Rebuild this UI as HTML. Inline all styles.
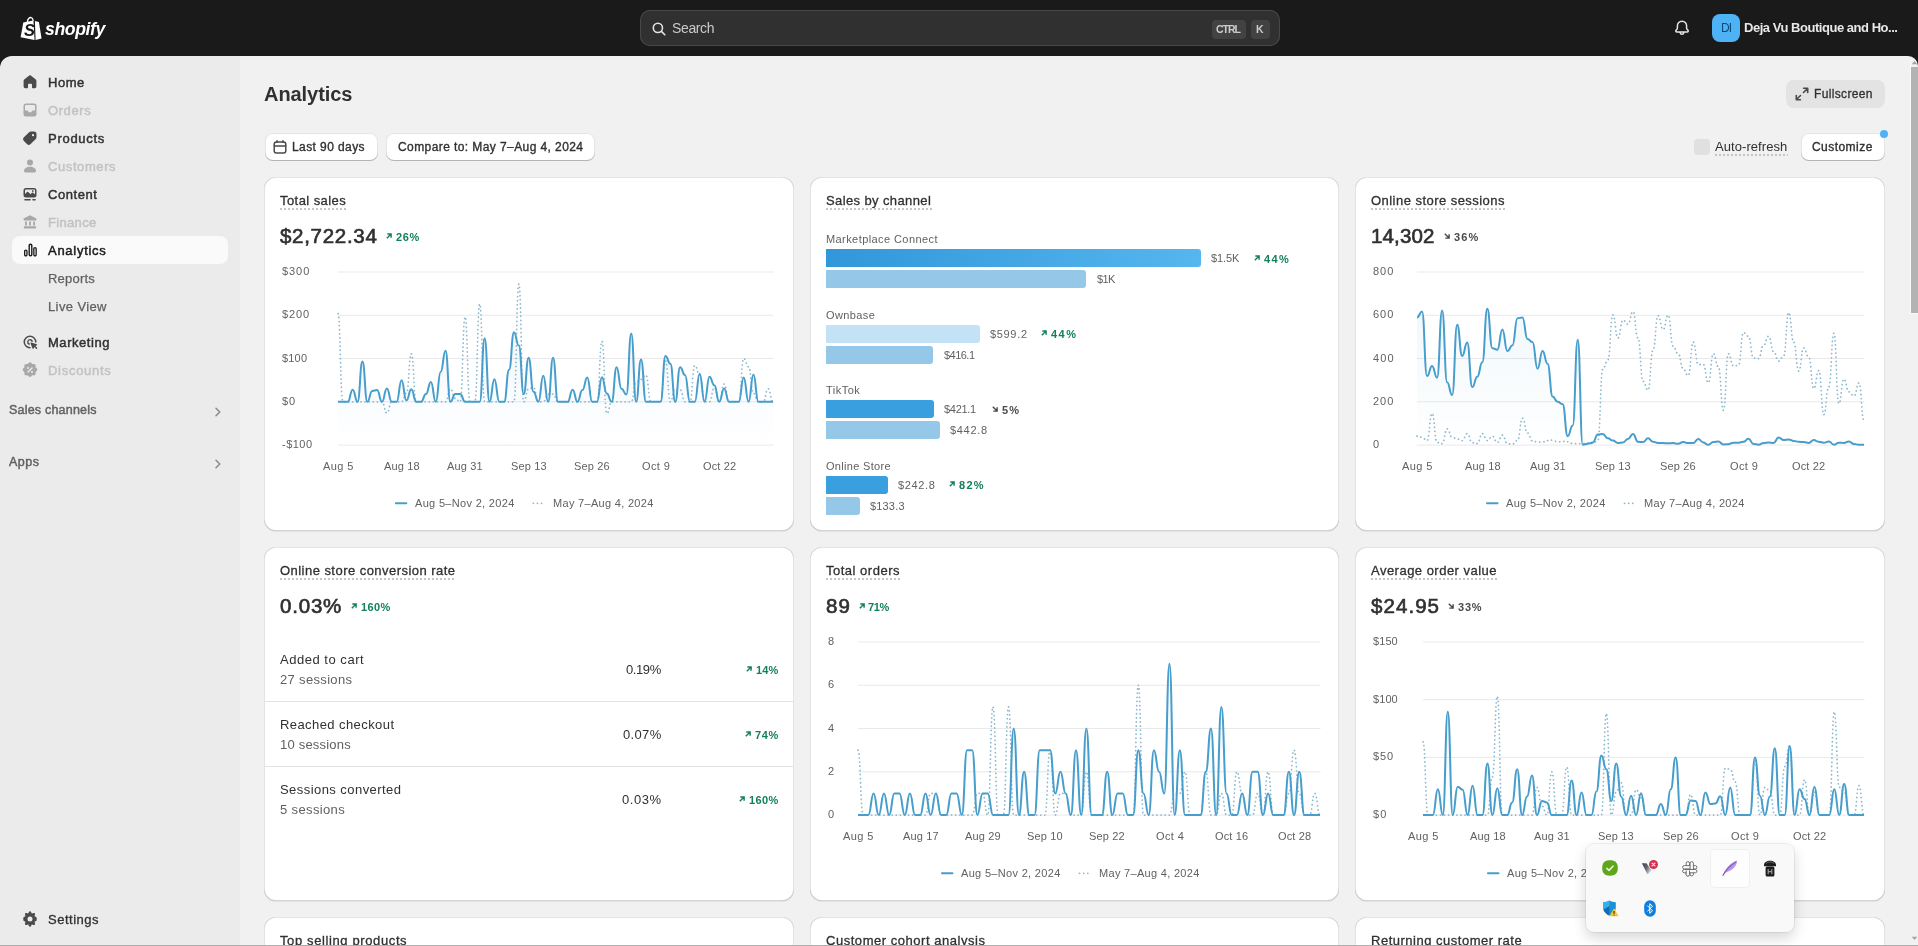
<!DOCTYPE html><html><head><meta charset="utf-8"><title>Analytics</title><style>
*{box-sizing:border-box;margin:0;padding:0}
html,body{width:1918px;height:946px;overflow:hidden;background:#1a1a1a;font-family:"Liberation Sans",sans-serif;}
.t{position:absolute;white-space:nowrap;display:block;will-change:transform}
.abs{position:absolute}
#root{position:absolute;left:0;top:0;width:1918px;height:946px;overflow:hidden;background:#1a1a1a}
#top{position:absolute;left:0;top:0;width:1918px;height:56px;background:#1a1a1a}
#side{position:absolute;left:0;top:56px;width:240px;height:890px;background:#ebebeb;border-top-left-radius:12px}
#main{position:absolute;left:240px;top:56px;width:1678px;height:890px;background:#f1f1f1;border-top-right-radius:10px;overflow:hidden}
.card{position:absolute;background:#fff;border-radius:12px;box-shadow:0 1px 0 0 rgba(26,26,26,.07), inset 1px 0 0 0 rgba(0,0,0,.11), inset -1px 0 0 0 rgba(0,0,0,.11), inset 0 -1px 0 0 rgba(0,0,0,.16), inset 0 1px 0 0 rgba(204,204,204,.5)}
.btn{position:absolute;background:#fff;border-radius:8px;box-shadow:inset 0 -1px 0 0 #b5b5b5, inset 0 0 0 1px rgba(0,0,0,.1), inset 0 .5px 0 1.5px #fff}
.ul{position:absolute;height:2px;background-image:radial-gradient(circle at 1px 1px,#c4c4c4 0.9px,transparent 1.1px);background-size:4px 2px;background-repeat:repeat-x}
svg{position:absolute;overflow:visible}
</style></head><body><div id="root">
<div id="top">
<svg style="left:19.5px;top:15.5px" width="22" height="25" viewBox="0 0 22 25">
<path d="M3.3 6.6 L13.4 4.6 L14.6 23.9 L0.6 21.3 Z" fill="#fff"/>
<path d="M14.9 4.9 L18.9 5.9 L21.6 22.4 L15.6 23.9 Z" fill="#fff"/>
<path d="M6.6 6.3 C6.9 2.6 9.2 0.6 11.2 0.9 C12.9 1.2 13.6 3.0 13.8 4.9 L12.6 5.2 C12.4 3.5 11.9 2.3 10.9 2.2 C9.6 2.1 8.2 3.8 8.0 6.0 Z" fill="#fff"/>
</svg>
<span class="t" style="left:24.00px;top:21.00px;font-size:16.5px;line-height:18px;font-weight:700;font-style:italic;color:#1a1a1a;">S</span>
<span class="t" style="left:45.00px;top:19.00px;font-size:17.7px;line-height:20px;font-weight:700;font-style:italic;color:#fff;letter-spacing:-0.440px;">shopify</span>
<div class="abs" style="left:640px;top:10px;width:640px;height:36px;background:#303030;border-radius:10px;box-shadow:inset 0 0 0 1px #484848"></div>
<svg style="left:652px;top:21.5px" width="14" height="14" viewBox="0 0 14 14"><circle cx="5.9" cy="5.9" r="4.6" fill="none" stroke="#e3e3e3" stroke-width="1.6"/><path d="M9.4 9.4 L12.8 12.8" stroke="#e3e3e3" stroke-width="1.6" stroke-linecap="round"/></svg>
<span class="t" style="left:672.00px;top:20.00px;font-size:14px;line-height:16px;font-weight:400;color:#c9c9c9;letter-spacing:-0.372px;">Search</span>
<div class="abs" style="left:1211.5px;top:19.5px;width:34.5px;height:19px;background:#424242;border-radius:4px"></div>
<span class="t" style="left:1216.00px;top:23.00px;font-size:10.5px;line-height:12px;font-weight:700;color:#cccccc;letter-spacing:-0.998px;">CTRL</span>
<div class="abs" style="left:1250.5px;top:19.5px;width:19px;height:19px;background:#424242;border-radius:4px"></div>
<span class="t" style="left:1256.00px;top:23.00px;font-size:10.5px;line-height:12px;font-weight:700;color:#cccccc;">K</span>
<svg style="left:1672px;top:18px" width="20" height="20" viewBox="0 0 20 20"><path d="M10 3.2c-2.6 0-4.6 2-4.6 4.6v2.1c0 .5-.2 1-.5 1.4l-.9 1c-.6.7-.1 1.7.8 1.7h10.4c.9 0 1.4-1 .8-1.7l-.9-1c-.3-.4-.5-.9-.5-1.4V7.800c0-2.600-2-4.600-4.600-4.600Z" fill="none" stroke="#e3e3e3" stroke-width="1.5" stroke-linejoin="round"/><path d="M8.100 14.600c.2 1 .9 1.700 1.900 1.700s1.700-.7 1.900-1.700" fill="none" stroke="#e3e3e3" stroke-width="1.5" stroke-linecap="round"/></svg>
<div class="abs" style="left:1712px;top:14px;width:28px;height:28px;background:#4eb3f4;border-radius:8px"></div>
<span class="t" style="left:1721.00px;top:21.00px;font-size:12px;line-height:14px;font-weight:400;color:#0b4a78;letter-spacing:-0.800px;">DI</span>
<span class="t" style="left:1744.00px;top:20.00px;font-size:13px;line-height:15px;font-weight:700;color:#e8e8e8;letter-spacing:-0.466px;">Deja Vu Boutique and Ho...</span>
</div>
<div id="side"></div>
<div class="abs" style="left:12px;top:236px;width:216px;height:28px;background:#fafafa;border-radius:8px"></div>
<svg style="left:20px;top:72px" width="20" height="20" viewBox="0 0 20 20" fill="#4a4a4a"><path d="M9.2 3.500a1.300 1.300 0 0 1 1.600 0l5 4.100c.4.300.600.800.600 1.300v5.600a1.700 1.700 0 0 1-1.700 1.700h-1.900a.8.8 0 0 1-.8-.8v-2.700a.9.900 0 0 0-.9-.9h-2.200a.9.900 0 0 0-.9.900v2.700a.8.8 0 0 1-.8.800h-1.900a1.700 1.700 0 0 1-1.700-1.700v-5.600c0-.5.200-1 .600-1.300l5-4.100Z"/></svg>
<span class="t" style="left:48.00px;top:75.00px;font-size:13px;line-height:15px;font-weight:400;color:#303030;letter-spacing:0.507px;-webkit-text-stroke:0.45px #303030;">Home</span>
<svg style="left:20px;top:100px" width="20" height="20" viewBox="0 0 20 20" fill="#a8a8a8"><path fill-rule="evenodd" d="M6 3.500a2.500 2.500 0 0 0-2.500 2.500v8a2.500 2.500 0 0 0 2.500 2.500h8a2.500 2.500 0 0 0 2.500-2.500v-8a2.500 2.500 0 0 0-2.500-2.500h-8Zm-1 2.700c0-.7.500-1.200 1.200-1.200h7.600c.7 0 1.200.5 1.200 1.200v4.300h-2.200c-.4 0-.7.200-.9.500l-.4.900c-.1.200-.3.300-.5.300h-2c-.2 0-.4-.1-.5-.3l-.4-.9c-.2-.3-.5-.5-.9-.5h-2.200v-4.300Z"/><path d="M8.300 8.300 10 9.800l1.700-1.500" stroke="#ebebeb" stroke-width="1" fill="none"/></svg>
<span class="t" style="left:48.00px;top:103.00px;font-size:13px;line-height:15px;font-weight:400;color:#c2c2c2;letter-spacing:0.580px;-webkit-text-stroke:0.45px #c2c2c2;">Orders</span>
<svg style="left:20px;top:128px" width="20" height="20" viewBox="0 0 20 20" fill="#4a4a4a"><path fill-rule="evenodd" d="M10.900 3.500a2.500 2.500 0 0 0-1.800.7l-5.400 5.400a2.300 2.300 0 0 0 0 3.200l3.500 3.500a2.300 2.300 0 0 0 3.200 0l5.400-5.400c.5-.5.700-1.100.7-1.800v-3.100a2.500 2.500 0 0 0-2.500-2.500h-3.100Zm2.100 4.800a1.100 1.100 0 1 0 0-2.200 1.100 1.100 0 0 0 0 2.200Z"/></svg>
<span class="t" style="left:48.00px;top:131.00px;font-size:13px;line-height:15px;font-weight:400;color:#303030;letter-spacing:0.720px;-webkit-text-stroke:0.45px #303030;">Products</span>
<svg style="left:20px;top:156px" width="20" height="20" viewBox="0 0 20 20" fill="#a8a8a8"><path d="M10 3.500a3 3 0 1 0 0 6 3 3 0 0 0 0-6Z"/><path d="M4 14.700c0-2.300 2.700-4 6-4s6 1.700 6 4c0 1-.8 1.800-1.800 1.800h-8.400c-1 0-1.800-.8-1.800-1.800Z"/></svg>
<span class="t" style="left:48.00px;top:159.00px;font-size:13px;line-height:15px;font-weight:400;color:#c2c2c2;letter-spacing:0.594px;-webkit-text-stroke:0.45px #c2c2c2;">Customers</span>
<svg style="left:20px;top:184px" width="20" height="20" viewBox="0 0 20 20" fill="#4a4a4a"><path fill-rule="evenodd" d="M6 4a2.500 2.500 0 0 0-2.500 2.500v4.500a2.500 2.500 0 0 0 2.500 2.500h8a2.500 2.500 0 0 0 2.500-2.500v-4.500a2.500 2.500 0 0 0-2.500-2.500h-8Zm-1 2.700c0-.7.500-1.200 1.200-1.200h7.600c.7 0 1.200.5 1.200 1.200v3.800l-1.800-1.700a.9.900 0 0 0-1.200 0l-1.600 1.500-2.100-2.300a.9.900 0 0 0-1.300 0l-2 2v-3.300Zm7.800 1.300a.9.900 0 1 0 0-1.800.9.900 0 0 0 0 1.800Z"/><path d="M4.200 15.700c0-.4.300-.7.700-.7h5.200c.4 0 .7.300.7.700s-.3.700-.7.700h-5.200a.7.700 0 0 1-.7-.7Zm8 0c0-.4.300-.7.700-.7h2.200c.4 0 .7.300.7.700s-.3.700-.7.700h-2.200a.7.700 0 0 1-.7-.7Z"/></svg>
<span class="t" style="left:48.00px;top:187.00px;font-size:13px;line-height:15px;font-weight:400;color:#303030;letter-spacing:0.545px;-webkit-text-stroke:0.45px #303030;">Content</span>
<svg style="left:20px;top:212px" width="20" height="20" viewBox="0 0 20 20" fill="#a8a8a8"><path d="M9.500 3.400a1 1 0 0 1 1 0l5.500 2.800c.3.200.5.500.5.800v.700c0 .4-.3.700-.7.700h-11.600a.7.700 0 0 1-.7-.7v-.7c0-.3.200-.6.500-.8l5.500-2.800Z"/><path d="M5 9.500h1.800v4h-1.800zM9.100 9.500h1.800v4h-1.800zM13.200 9.500h1.800v4h-1.800z"/><path d="M3.800 15.400c0-.6.500-1.100 1.100-1.100h10.200c.6 0 1.100.5 1.100 1.100v.3c0 .5-.4.800-.8.800h-10.800a.8.800 0 0 1-.8-.8v-.3Z"/></svg>
<span class="t" style="left:48.00px;top:215.00px;font-size:13px;line-height:15px;font-weight:400;color:#c2c2c2;letter-spacing:0.325px;-webkit-text-stroke:0.45px #c2c2c2;">Finance</span>
<svg style="left:20px;top:240px" width="20" height="20" viewBox="0 0 20 20" fill="#1a1a1a"><path fill-rule="evenodd" d="M10.500 3.500c-1.100 0-2 .9-2 2v9c0 1.100.9 2 2 2s2-.9 2-2v-9c0-1.100-.9-2-2-2Zm-.6 2c0-.3.300-.6.600-.6s.6.300.6.600v9c0 .3-.3.600-.6.600s-.6-.3-.6-.6v-9Z"/><path fill-rule="evenodd" d="M15 7c-1 0-1.800.8-1.800 1.800v5.900c0 1 .8 1.800 1.800 1.800s1.800-.8 1.800-1.800v-5.900c0-1-.8-1.800-1.800-1.800Zm-.5 1.800c0-.3.200-.5.500-.5s.5.200.5.500v5.900c0 .3-.2.500-.5.500s-.5-.2-.5-.5v-5.900Z"/><path fill-rule="evenodd" d="M5.800 9.500c-1 0-1.800.8-1.800 1.800v3.400c0 1 .8 1.800 1.800 1.800s1.800-.8 1.800-1.800v-3.400c0-1-.8-1.800-1.800-1.800Zm-.5 1.800c0-.3.200-.5.500-.5s.5.200.5.500v3.400c0 .3-.2.500-.5.500s-.5-.2-.5-.5v-3.400Z"/></svg>
<span class="t" style="left:48.00px;top:243.00px;font-size:13px;line-height:15px;font-weight:400;color:#1a1a1a;letter-spacing:0.723px;-webkit-text-stroke:0.45px #1a1a1a;">Analytics</span>
<span class="t" style="left:48.00px;top:271.00px;font-size:13px;line-height:15px;font-weight:400;color:#616161;letter-spacing:0.213px;-webkit-text-stroke:0.25px #616161;">Reports</span>
<span class="t" style="left:48.00px;top:299.00px;font-size:13px;line-height:15px;font-weight:400;color:#616161;letter-spacing:0.387px;-webkit-text-stroke:0.25px #616161;">Live View</span>
<svg style="left:20px;top:332px" width="20" height="20" viewBox="0 0 20 20" fill="#4a4a4a"><path d="M10 3.500a6.500 6.500 0 1 0 0 13c.4 0 .8-.3.800-.8s-.4-.7-.8-.7a5 5 0 1 1 5-5c0 .4.300.8.700.8s.8-.4.800-.8a6.500 6.500 0 0 0-6.500-6.500Z"/><path d="M10 7a3 3 0 0 0-1 5.800c.4.100.8-.1 1-.5.100-.4-.1-.8-.5-1a1.500 1.500 0 1 1 1.900-1.800c.1.400.5.600.9.500.4-.1.700-.5.600-.9a3 3 0 0 0-2.900-2.100Z"/><path d="M11.300 10.500c-.5-.2-1 .3-.8.800l2 5.200c.2.500.9.500 1.100.1l.8-1.500 1.700 1.700c.3.300.7.300 1 0 .3-.3.300-.7 0-1l-1.700-1.700 1.500-.8c.4-.2.400-.9-.1-1.100l-5.500-1.700Z"/></svg>
<span class="t" style="left:48.00px;top:335.00px;font-size:13px;line-height:15px;font-weight:400;color:#303030;letter-spacing:0.540px;-webkit-text-stroke:0.45px #303030;">Marketing</span>
<svg style="left:20px;top:360px" width="20" height="20" viewBox="0 0 20 20" fill="#a8a8a8"><path fill-rule="evenodd" d="M11.600 3.300a2.100 2.100 0 0 0-3.200 0l-.4.500c-.2.200-.4.300-.7.300l-.7-.1a2.100 2.100 0 0 0-2.300 2.300l.1.700c0 .3-.1.500-.3.700l-.5.400a2.100 2.100 0 0 0 0 3.200l.5.400c.2.200.3.400.3.700l-.1.700a2.100 2.100 0 0 0 2.300 2.300l.7-.1c.3 0 .5.100.7.300l.4.500a2.100 2.100 0 0 0 3.200 0l.4-.5c.2-.2.400-.3.700-.3l.7.100a2.100 2.100 0 0 0 2.300-2.300l-.1-.7c0-.3.100-.5.300-.7l.5-.4a2.100 2.100 0 0 0 0-3.200l-.5-.4c-.2-.2-.3-.4-.3-.7l.1-.7a2.100 2.100 0 0 0-2.300-2.300l-.7.100c-.3 0-.5-.1-.7-.3l-.4-.5Zm-3.600 5.700a1 1 0 1 0 0-2 1 1 0 0 0 0 2Zm4.500-1.500c.3.300.3.700 0 1l-4 4c-.3.300-.7.300-1 0-.3-.3-.3-.7 0-1l4-4c.3-.3.700-.3 1 0Zm-.5 5.500a1 1 0 1 0 0-2 1 1 0 0 0 0 2Z"/></svg>
<span class="t" style="left:48.00px;top:363.00px;font-size:13px;line-height:15px;font-weight:400;color:#c2c2c2;letter-spacing:0.721px;-webkit-text-stroke:0.45px #c2c2c2;">Discounts</span>
<span class="t" style="left:9.00px;top:403.00px;font-size:12.5px;line-height:14px;font-weight:400;color:#616161;letter-spacing:0.209px;-webkit-text-stroke:0.45px #616161;">Sales channels</span>
<span class="t" style="left:9.00px;top:455.00px;font-size:12.5px;line-height:14px;font-weight:400;color:#616161;letter-spacing:0.503px;-webkit-text-stroke:0.45px #616161;">Apps</span>
<svg style="left:208px;top:402px" width="20" height="20" viewBox="0 0 20 20"><path d="M8 6.200 L11.800 10 L8 13.800" fill="none" stroke="#8a8a8a" stroke-width="1.500" stroke-linecap="round" stroke-linejoin="round"/></svg>
<svg style="left:208px;top:454px" width="20" height="20" viewBox="0 0 20 20"><path d="M8 6.200 L11.800 10 L8 13.800" fill="none" stroke="#8a8a8a" stroke-width="1.500" stroke-linecap="round" stroke-linejoin="round"/></svg>
<svg style="left:20px;top:909px" width="20" height="20" viewBox="0 0 20 20" fill="#4a4a4a"><path fill-rule="evenodd" d="M8.800 3.200c.2-.5.700-.9 1.200-.9s1 .4 1.200.9l.3.900c.1.300.5.500.8.300l.9-.4c.5-.2 1.100-.1 1.500.3.400.4.500 1 .3 1.500l-.4.900c-.2.300 0 .7.300.8l.9.300c.5.200.9.700.9 1.200v2c0 .5-.4 1-.9 1.200l-.9.300c-.3.100-.5.500-.3.800l.4.900c.2.500.1 1.100-.3 1.500-.4.400-1 .5-1.500.3l-.9-.4c-.3-.2-.7 0-.8.300l-.3.900c-.2.500-.7.900-1.200.9s-1-.4-1.200-.9l-.3-.9c-.1-.3-.5-.5-.8-.3l-.9.400c-.5.200-1.100.1-1.500-.3-.4-.4-.5-1-.3-1.500l.4-.9c.2-.3 0-.7-.3-.8l-.9-.3c-.5-.2-.9-.7-.9-1.200v-2c0-.5.400-1 .9-1.200l.9-.3c.3-.1.500-.5.300-.8l-.4-.9c-.2-.5-.1-1.100.3-1.500.4-.4 1-.5 1.500-.3l.9.400c.3.200.7 0 .8-.3l.3-.9Zm1.200 9.300a2.500 2.500 0 1 0 0-5 2.500 2.500 0 0 0 0 5Z" transform="translate(0.000,-0.000)"/></svg>
<span class="t" style="left:48.00px;top:912.00px;font-size:13px;line-height:15px;font-weight:400;color:#303030;letter-spacing:0.504px;-webkit-text-stroke:0.3px #303030;">Settings</span>
<div id="main"></div>
<span class="t" style="left:264.00px;top:83.00px;font-size:20px;line-height:22px;font-weight:700;color:#303030;letter-spacing:-0.066px;">Analytics</span>
<div class="abs" style="left:1786px;top:80px;width:98.5px;height:27.5px;background:#e3e3e3;border-radius:8px"></div>
<svg style="left:1792px;top:84px" width="20" height="20" viewBox="0 0 20 20" fill="none" stroke="#4a4a4a" stroke-width="1.600" stroke-linecap="round" stroke-linejoin="round"><path d="M11.600 4.300h4.100v4.100M15.500 4.500l-4 4M8.400 15.700h-4.100v-4.100M4.500 15.500l4-4"/></svg>
<span class="t" style="left:1814.00px;top:87.00px;font-size:12px;line-height:14px;font-weight:400;color:#303030;letter-spacing:0.349px;-webkit-text-stroke:0.3px #303030;">Fullscreen</span>
<div class="btn" style="left:264.500px;top:133px;width:113px;height:27.500px"></div>
<svg style="left:270px;top:136.500px" width="20" height="20" viewBox="0 0 20 20" fill="none" stroke="#4a4a4a" stroke-width="1.500" stroke-linecap="round"><rect x="4.200" y="5" width="11.600" height="11" rx="2.300"/><path d="M4.500 9h11M7 3.700v1.500M13 3.700v1.500"/></svg>
<span class="t" style="left:292.00px;top:140.00px;font-size:12px;line-height:14px;font-weight:400;color:#303030;letter-spacing:0.414px;-webkit-text-stroke:0.35px #303030;">Last 90 days</span>
<div class="btn" style="left:386px;top:133px;width:208.500px;height:27.500px"></div>
<span class="t" style="left:398.00px;top:140.00px;font-size:12px;line-height:14px;font-weight:400;color:#303030;letter-spacing:0.413px;-webkit-text-stroke:0.35px #303030;">Compare to: May 7–Aug 4, 2024</span>
<div class="abs" style="left:1694px;top:139px;width:16px;height:16px;background:#e0e0e0;border-radius:4px"></div>
<span class="t" style="left:1715.00px;top:139.00px;font-size:13px;line-height:15px;font-weight:400;color:#303030;letter-spacing:0.070px;">Auto-refresh</span>
<div class="ul" style="left:1715px;top:154px;width:73px"></div>
<div class="btn" style="left:1800.500px;top:133px;width:84.500px;height:27.500px"></div>
<span class="t" style="left:1812.00px;top:140.00px;font-size:12px;line-height:14px;font-weight:400;color:#303030;letter-spacing:0.452px;-webkit-text-stroke:0.35px #303030;">Customize</span>
<div class="abs" style="left:1880px;top:130px;width:8px;height:8px;border-radius:50%;background:#4eb3f4"></div>
<div class="card" style="left:264px;top:177px;width:529.67px;height:354px"></div>
<div class="card" style="left:809.67px;top:177px;width:529.67px;height:354px"></div>
<div class="card" style="left:1355.33px;top:177px;width:529.67px;height:354px"></div>
<div class="card" style="left:264px;top:547px;width:529.67px;height:354px"></div>
<div class="card" style="left:809.67px;top:547px;width:529.67px;height:354px"></div>
<div class="card" style="left:1355.33px;top:547px;width:529.67px;height:354px"></div>
<div class="card" style="left:264px;top:917px;width:529.67px;height:60px"></div>
<div class="card" style="left:809.67px;top:917px;width:529.67px;height:60px"></div>
<div class="card" style="left:1355.33px;top:917px;width:529.67px;height:60px"></div>
<span class="t" style="left:280.00px;top:193.00px;font-size:13px;line-height:15px;font-weight:400;color:#303030;letter-spacing:0.428px;-webkit-text-stroke:0.3px #303030;">Total sales</span>
<div class="ul" style="left:279.5px;top:208.1px;width:67.2px"></div>
<span class="t" style="left:280.00px;top:224.00px;font-size:20.5px;line-height:23px;font-weight:400;color:#303030;letter-spacing:0.700px;-webkit-text-stroke:0.65px #303030;">$2,722.34</span>
<svg style="left:386px;top:233.1px" width="6" height="6" viewBox="0 0 6 6"><path d="M0.800 5.2 L4.8 1.200 M1.300 0.900 H5.1 V4.7" fill="none" stroke="#13805a" stroke-width="1.450" stroke-linejoin="miter"/></svg>
<span class="t" style="left:396.00px;top:231.00px;font-size:11px;line-height:12px;font-weight:700;color:#13805a;letter-spacing:0.592px;">26%</span>
<svg style="left:0;top:0" width="1918" height="946" viewBox="0 0 1918 946"><defs><linearGradient id="g1" x1="0" y1="0" x2="0" y2="1"><stop offset="0" stop-color="#479dcb" stop-opacity="0.075"/><stop offset="1" stop-color="#479dcb" stop-opacity="0.0"/></linearGradient></defs><rect x="338" y="271.50" width="435.5" height="1" fill="#e9e9e9"/><rect x="338" y="314.77" width="435.5" height="1" fill="#e9e9e9"/><rect x="338" y="358.03" width="435.5" height="1" fill="#e9e9e9"/><rect x="338" y="401.30" width="435.5" height="1" fill="#e9e9e9"/><rect x="338" y="444.57" width="435.5" height="1" fill="#e9e9e9"/><path d="M338.00,401.80L342.89,401.80L347.78,401.80C350.22,401.80 350.22,389.69 352.66,389.69C355.11,389.69 355.11,401.80 357.55,401.80C359.99,401.80 359.99,361.56 362.44,361.56C364.88,361.56 364.88,401.80 367.33,401.80C369.77,401.80 369.77,390.99 372.21,390.99C374.66,390.99 374.66,390.12 377.10,390.12C379.54,390.12 379.54,401.80 381.99,401.80C384.43,401.80 384.43,388.39 386.88,388.39C389.32,388.39 389.32,401.80 391.76,401.80L396.65,401.80C399.10,401.80 399.10,380.17 401.54,380.17C403.98,380.17 403.98,400.50 406.43,400.50C408.87,400.50 408.87,389.25 411.31,389.25C413.76,389.25 413.76,401.80 416.20,401.80L421.09,401.80C423.53,401.80 423.53,394.01 425.98,394.01C428.42,394.01 428.42,381.90 430.87,381.90C433.31,381.90 433.31,401.80 435.75,401.80C438.20,401.80 438.20,371.95 440.64,371.95C443.08,371.95 443.08,350.75 445.53,350.75C447.97,350.75 447.97,401.80 450.42,401.80C452.86,401.80 452.86,394.01 455.30,394.01L460.19,394.01C462.63,394.01 462.63,401.80 465.08,401.80L469.97,401.80L474.85,401.80L479.74,401.80C482.19,401.80 482.19,338.20 484.63,338.20C487.07,338.20 487.07,401.80 489.52,401.80C491.96,401.80 491.96,379.30 494.40,379.30C496.85,379.30 496.85,401.80 499.29,401.80L504.18,401.80C506.62,401.80 506.62,369.78 509.07,369.78C511.51,369.78 511.51,332.14 513.96,332.14C516.40,332.14 516.40,345.55 518.84,345.55C521.29,345.55 521.29,394.01 523.73,394.01C526.17,394.01 526.17,357.67 528.62,357.67C531.06,357.67 531.06,391.85 533.51,391.85C535.95,391.85 535.95,401.80 538.39,401.80C540.84,401.80 540.84,375.84 543.28,375.84C545.72,375.84 545.72,401.80 548.17,401.80C550.61,401.80 550.61,357.67 553.06,357.67C555.50,357.67 555.50,401.80 557.94,401.80L562.83,401.80L567.72,401.80C570.16,401.80 570.16,389.69 572.61,389.69C575.05,389.69 575.05,401.80 577.49,401.80C579.94,401.80 579.94,390.12 582.38,390.12C584.83,390.12 584.83,377.57 587.27,377.57C589.71,377.57 589.71,401.80 592.16,401.80L597.04,401.80C599.49,401.80 599.49,377.14 601.93,377.14C604.38,377.14 604.38,393.58 606.82,393.58C609.26,393.58 609.26,401.80 611.71,401.80C614.15,401.80 614.15,367.19 616.60,367.19C619.04,367.19 619.04,388.82 621.48,388.82C623.93,388.82 623.93,394.45 626.37,394.45C628.81,394.45 628.81,333.44 631.26,333.44C633.70,333.44 633.70,401.80 636.15,401.80C638.59,401.80 638.59,359.40 641.03,359.40C643.48,359.40 643.48,401.80 645.92,401.80L650.81,401.80L655.70,401.80L660.58,401.80C663.03,401.80 663.03,355.94 665.47,355.94C667.92,355.94 667.92,363.73 670.36,363.73C672.80,363.73 672.80,401.80 675.25,401.80C677.69,401.80 677.69,367.19 680.13,367.19C682.58,367.19 682.58,374.98 685.02,374.98C687.47,374.98 687.47,401.80 689.91,401.80L694.80,401.80C697.24,401.80 697.24,373.68 699.69,373.68C702.13,373.68 702.13,401.80 704.57,401.80C707.02,401.80 707.02,376.71 709.46,376.71C711.90,376.71 711.90,385.36 714.35,385.36C716.79,385.36 716.79,401.80 719.24,401.80C721.68,401.80 721.68,388.39 724.12,388.39C726.57,388.39 726.57,401.80 729.01,401.80L733.90,401.80L738.79,401.80C741.23,401.80 741.23,377.57 743.67,377.57C746.12,377.57 746.12,401.80 748.56,401.80C751.01,401.80 751.01,374.54 753.45,374.54C755.89,374.54 755.89,401.80 758.34,401.80L763.22,401.80L768.11,401.80L773.00,401.80L773,445.07L338,445.07Z" fill="url(#g1)"/><path d="M338.00,313.54C340.44,313.54 340.44,401.80 342.89,401.80L347.78,401.80L352.66,401.80L357.55,401.80L362.44,401.80L367.33,401.80L372.21,401.80L377.10,401.80L381.99,401.80C384.43,401.80 384.43,413.05 386.88,413.05C389.32,413.05 389.32,401.80 391.76,401.80L396.65,401.80L401.54,401.80C403.98,401.80 403.98,393.15 406.43,393.15C408.87,393.15 408.87,353.78 411.31,353.78C413.76,353.78 413.76,401.80 416.20,401.80L421.09,401.80L425.98,401.80L430.87,401.80L435.75,401.80L440.64,401.80L445.53,401.80C447.97,401.80 447.97,388.82 450.42,388.82C452.86,388.82 452.86,398.34 455.30,398.34C457.75,398.34 457.75,401.80 460.19,401.80C462.63,401.80 462.63,317.00 465.08,317.00C467.52,317.00 467.52,401.80 469.97,401.80L474.85,401.80C477.30,401.80 477.30,304.02 479.74,304.02C482.19,304.02 482.19,401.80 484.63,401.80L489.52,401.80L494.40,401.80L499.29,401.80L504.18,401.80L509.07,401.80L513.96,401.80C516.40,401.80 516.40,284.11 518.84,284.11C521.29,284.11 521.29,401.80 523.73,401.80C526.17,401.80 526.17,388.82 528.62,388.82C531.06,388.82 531.06,387.52 533.51,387.52C535.95,387.52 535.95,401.80 538.39,401.80L543.28,401.80C545.72,401.80 545.72,394.01 548.17,394.01L553.06,394.01C555.50,394.01 555.50,401.80 557.94,401.80L562.83,401.80L567.72,401.80L572.61,401.80L577.49,401.80L582.38,401.80L587.27,401.80L592.16,401.80L597.04,401.80C599.49,401.80 599.49,341.23 601.93,341.23C604.38,341.23 604.38,413.48 606.82,413.48C609.26,413.48 609.26,401.80 611.71,401.80L616.60,401.80L621.48,401.80L626.37,401.80L631.26,401.80C633.70,401.80 633.70,382.33 636.15,382.33C638.59,382.33 638.59,379.30 641.03,379.30C643.48,379.30 643.48,374.98 645.92,374.98C648.37,374.98 648.37,401.80 650.81,401.80L655.70,401.80L660.58,401.80C663.03,401.80 663.03,360.70 665.47,360.70C667.92,360.70 667.92,401.80 670.36,401.80C672.80,401.80 672.80,388.82 675.25,388.82C677.69,388.82 677.69,389.69 680.13,389.69C682.58,389.69 682.58,401.80 685.02,401.80L689.91,401.80C692.35,401.80 692.35,365.46 694.80,365.46C697.24,365.46 697.24,374.98 699.69,374.98C702.13,374.98 702.13,401.80 704.57,401.80L709.46,401.80C711.90,401.80 711.90,387.52 714.35,387.52C716.79,387.52 716.79,401.80 719.24,401.80C721.68,401.80 721.68,384.06 724.12,384.06C726.57,384.06 726.57,401.80 729.01,401.80L733.90,401.80L738.79,401.80C741.23,401.80 741.23,358.53 743.67,358.53C746.12,358.53 746.12,366.76 748.56,366.76C751.01,366.76 751.01,393.15 753.45,393.15C755.89,393.15 755.89,401.80 758.34,401.80L763.22,401.80C765.67,401.80 765.67,388.82 768.11,388.82C770.56,388.82 770.56,401.80 773.00,401.80" fill="none" stroke="#8db8cf" stroke-width="1.750" stroke-dasharray="0.1 4" stroke-linecap="round"/><path d="M338.00,401.80L342.89,401.80L347.78,401.80C350.22,401.80 350.22,389.69 352.66,389.69C355.11,389.69 355.11,401.80 357.55,401.80C359.99,401.80 359.99,361.56 362.44,361.56C364.88,361.56 364.88,401.80 367.33,401.80C369.77,401.80 369.77,390.99 372.21,390.99C374.66,390.99 374.66,390.12 377.10,390.12C379.54,390.12 379.54,401.80 381.99,401.80C384.43,401.80 384.43,388.39 386.88,388.39C389.32,388.39 389.32,401.80 391.76,401.80L396.65,401.80C399.10,401.80 399.10,380.17 401.54,380.17C403.98,380.17 403.98,400.50 406.43,400.50C408.87,400.50 408.87,389.25 411.31,389.25C413.76,389.25 413.76,401.80 416.20,401.80L421.09,401.80C423.53,401.80 423.53,394.01 425.98,394.01C428.42,394.01 428.42,381.90 430.87,381.90C433.31,381.90 433.31,401.80 435.75,401.80C438.20,401.80 438.20,371.95 440.64,371.95C443.08,371.95 443.08,350.75 445.53,350.75C447.97,350.75 447.97,401.80 450.42,401.80C452.86,401.80 452.86,394.01 455.30,394.01L460.19,394.01C462.63,394.01 462.63,401.80 465.08,401.80L469.97,401.80L474.85,401.80L479.74,401.80C482.19,401.80 482.19,338.20 484.63,338.20C487.07,338.20 487.07,401.80 489.52,401.80C491.96,401.80 491.96,379.30 494.40,379.30C496.85,379.30 496.85,401.80 499.29,401.80L504.18,401.80C506.62,401.80 506.62,369.78 509.07,369.78C511.51,369.78 511.51,332.14 513.96,332.14C516.40,332.14 516.40,345.55 518.84,345.55C521.29,345.55 521.29,394.01 523.73,394.01C526.17,394.01 526.17,357.67 528.62,357.67C531.06,357.67 531.06,391.85 533.51,391.85C535.95,391.85 535.95,401.80 538.39,401.80C540.84,401.80 540.84,375.84 543.28,375.84C545.72,375.84 545.72,401.80 548.17,401.80C550.61,401.80 550.61,357.67 553.06,357.67C555.50,357.67 555.50,401.80 557.94,401.80L562.83,401.80L567.72,401.80C570.16,401.80 570.16,389.69 572.61,389.69C575.05,389.69 575.05,401.80 577.49,401.80C579.94,401.80 579.94,390.12 582.38,390.12C584.83,390.12 584.83,377.57 587.27,377.57C589.71,377.57 589.71,401.80 592.16,401.80L597.04,401.80C599.49,401.80 599.49,377.14 601.93,377.14C604.38,377.14 604.38,393.58 606.82,393.58C609.26,393.58 609.26,401.80 611.71,401.80C614.15,401.80 614.15,367.19 616.60,367.19C619.04,367.19 619.04,388.82 621.48,388.82C623.93,388.82 623.93,394.45 626.37,394.45C628.81,394.45 628.81,333.44 631.26,333.44C633.70,333.44 633.70,401.80 636.15,401.80C638.59,401.80 638.59,359.40 641.03,359.40C643.48,359.40 643.48,401.80 645.92,401.80L650.81,401.80L655.70,401.80L660.58,401.80C663.03,401.80 663.03,355.94 665.47,355.94C667.92,355.94 667.92,363.73 670.36,363.73C672.80,363.73 672.80,401.80 675.25,401.80C677.69,401.80 677.69,367.19 680.13,367.19C682.58,367.19 682.58,374.98 685.02,374.98C687.47,374.98 687.47,401.80 689.91,401.80L694.80,401.80C697.24,401.80 697.24,373.68 699.69,373.68C702.13,373.68 702.13,401.80 704.57,401.80C707.02,401.80 707.02,376.71 709.46,376.71C711.90,376.71 711.90,385.36 714.35,385.36C716.79,385.36 716.79,401.80 719.24,401.80C721.68,401.80 721.68,388.39 724.12,388.39C726.57,388.39 726.57,401.80 729.01,401.80L733.90,401.80L738.79,401.80C741.23,401.80 741.23,377.57 743.67,377.57C746.12,377.57 746.12,401.80 748.56,401.80C751.01,401.80 751.01,374.54 753.45,374.54C755.89,374.54 755.89,401.80 758.34,401.80L763.22,401.80L768.11,401.80L773.00,401.80" fill="none" stroke="#479dcb" stroke-width="2" stroke-linejoin="round" stroke-linecap="butt"/><rect x="394.8" y="502.3" width="12.500" height="2" rx="1" fill="#479dcb"/><path d="M533.3,503.3h12" fill="none" stroke="#8db8cf" stroke-width="1.750" stroke-dasharray="0.1 4" stroke-linecap="round"/></svg>
<span class="t" style="left:282.00px;top:265.00px;font-size:11px;line-height:12px;font-weight:400;color:#616161;letter-spacing:0.943px;">$300</span>
<span class="t" style="left:282.00px;top:308.00px;font-size:11px;line-height:12px;font-weight:400;color:#616161;letter-spacing:0.843px;">$200</span>
<span class="t" style="left:282.00px;top:352.00px;font-size:11px;line-height:12px;font-weight:400;color:#616161;letter-spacing:0.176px;">$100</span>
<span class="t" style="left:282.00px;top:395.00px;font-size:11px;line-height:12px;font-weight:400;color:#616161;letter-spacing:0.964px;">$0</span>
<span class="t" style="left:282.00px;top:438.00px;font-size:11px;line-height:12px;font-weight:400;color:#616161;letter-spacing:0.466px;">-$100</span>
<span class="t" style="left:323.00px;top:460.00px;font-size:11px;line-height:12px;font-weight:400;color:#616161;letter-spacing:0.431px;">Aug 5</span>
<span class="t" style="left:384.00px;top:460.00px;font-size:11px;line-height:12px;font-weight:400;color:#616161;letter-spacing:0.139px;">Aug 18</span>
<span class="t" style="left:447.00px;top:460.00px;font-size:11px;line-height:12px;font-weight:400;color:#616161;letter-spacing:0.139px;">Aug 31</span>
<span class="t" style="left:511.00px;top:460.00px;font-size:11px;line-height:12px;font-weight:400;color:#616161;letter-spacing:0.139px;">Sep 13</span>
<span class="t" style="left:574.00px;top:460.00px;font-size:11px;line-height:12px;font-weight:400;color:#616161;letter-spacing:0.139px;">Sep 26</span>
<span class="t" style="left:642.00px;top:460.00px;font-size:11px;line-height:12px;font-weight:400;color:#616161;letter-spacing:0.394px;">Oct 9</span>
<span class="t" style="left:703.00px;top:460.00px;font-size:11px;line-height:12px;font-weight:400;color:#616161;letter-spacing:0.130px;">Oct 22</span>
<span class="t" style="left:415.00px;top:497.00px;font-size:11px;line-height:12px;font-weight:400;color:#616161;letter-spacing:0.320px;">Aug 5–Nov 2, 2024</span>
<span class="t" style="left:553.00px;top:497.00px;font-size:11px;line-height:12px;font-weight:400;color:#616161;letter-spacing:0.306px;">May 7–Aug 4, 2024</span>
<span class="t" style="left:826.00px;top:193.00px;font-size:13px;line-height:15px;font-weight:400;color:#303030;letter-spacing:0.386px;-webkit-text-stroke:0.3px #303030;">Sales by channel</span>
<div class="ul" style="left:825.5px;top:208.1px;width:106.3px"></div>
<span class="t" style="left:826.00px;top:233.00px;font-size:11px;line-height:12px;font-weight:400;color:#616161;letter-spacing:0.420px;">Marketplace Connect</span>
<div class="abs" style="left:825.9px;top:249.2px;width:375.1px;height:18.2px;background:linear-gradient(90deg,#3197da,#56b6ee);border-radius:0 3px 3px 0"></div>
<span class="t" style="left:1211.00px;top:252.00px;font-size:11px;line-height:12px;font-weight:400;color:#616161;letter-spacing:-0.087px;">$1.5K</span>
<svg style="left:1253.6px;top:254.69999999999996px" width="6" height="6" viewBox="0 0 6 6"><path d="M0.800 5.2 L4.8 1.200 M1.300 0.900 H5.1 V4.7" fill="none" stroke="#13805a" stroke-width="1.450" stroke-linejoin="miter"/></svg>
<span class="t" style="left:1264.00px;top:253.00px;font-size:11px;line-height:12px;font-weight:700;color:#13805a;letter-spacing:1.392px;">44%</span>
<div class="abs" style="left:825.9px;top:270.05px;width:260.2px;height:18.2px;background:#95c8e8;border-radius:0 3px 3px 0"></div>
<span class="t" style="left:1097.00px;top:273.00px;font-size:11px;line-height:12px;font-weight:400;color:#616161;letter-spacing:-0.587px;">$1K</span>
<span class="t" style="left:826.00px;top:309.00px;font-size:11px;line-height:12px;font-weight:400;color:#616161;letter-spacing:0.388px;">Ownbase</span>
<div class="abs" style="left:825.9px;top:324.7px;width:154.2px;height:18.2px;background:#c4e2f6;border-radius:0 3px 3px 0"></div>
<span class="t" style="left:990.00px;top:328.00px;font-size:11px;line-height:12px;font-weight:400;color:#616161;letter-spacing:0.671px;">$599.2</span>
<svg style="left:1041.1px;top:330.2px" width="6" height="6" viewBox="0 0 6 6"><path d="M0.800 5.2 L4.8 1.200 M1.300 0.900 H5.1 V4.7" fill="none" stroke="#13805a" stroke-width="1.450" stroke-linejoin="miter"/></svg>
<span class="t" style="left:1051.00px;top:328.00px;font-size:11px;line-height:12px;font-weight:700;color:#13805a;letter-spacing:1.492px;">44%</span>
<div class="abs" style="left:825.9px;top:345.55px;width:107.1px;height:18.2px;background:#95c8e8;border-radius:0 3px 3px 0"></div>
<span class="t" style="left:944.00px;top:349.00px;font-size:11px;line-height:12px;font-weight:400;color:#616161;letter-spacing:-0.529px;">$416.1</span>
<span class="t" style="left:826.00px;top:384.00px;font-size:11px;line-height:12px;font-weight:400;color:#616161;letter-spacing:0.485px;">TikTok</span>
<div class="abs" style="left:825.9px;top:400.2px;width:108.2px;height:18.2px;background:#3a9fde;border-radius:0 3px 3px 0"></div>
<span class="t" style="left:944.00px;top:403.00px;font-size:11px;line-height:12px;font-weight:400;color:#616161;letter-spacing:-0.289px;">$421.1</span>
<svg style="left:992px;top:405.7px" width="6" height="6" viewBox="0 0 6 6"><path d="M0.800 0.800 L4.8 4.8 M1.300 5.1 H5.1 V1.300" fill="none" stroke="#4a4a4a" stroke-width="1.450" stroke-linejoin="miter"/></svg>
<span class="t" style="left:1002.00px;top:404.00px;font-size:11px;line-height:12px;font-weight:700;color:#4a4a4a;letter-spacing:1.102px;">5%</span>
<div class="abs" style="left:825.9px;top:421.05px;width:114.1px;height:18.2px;background:#95c8e8;border-radius:0 3px 3px 0"></div>
<span class="t" style="left:950.00px;top:424.00px;font-size:11px;line-height:12px;font-weight:400;color:#616161;letter-spacing:0.691px;">$442.8</span>
<span class="t" style="left:826.00px;top:460.00px;font-size:11px;line-height:12px;font-weight:400;color:#616161;letter-spacing:0.305px;">Online Store</span>
<div class="abs" style="left:825.9px;top:475.7px;width:62.1px;height:18.2px;background:#3a9fde;border-radius:0 3px 3px 0"></div>
<span class="t" style="left:898.00px;top:479.00px;font-size:11px;line-height:12px;font-weight:400;color:#616161;letter-spacing:0.631px;">$242.8</span>
<svg style="left:949.2px;top:481.2px" width="6" height="6" viewBox="0 0 6 6"><path d="M0.800 5.2 L4.8 1.200 M1.300 0.900 H5.1 V4.7" fill="none" stroke="#13805a" stroke-width="1.450" stroke-linejoin="miter"/></svg>
<span class="t" style="left:959.00px;top:479.00px;font-size:11px;line-height:12px;font-weight:700;color:#13805a;letter-spacing:1.292px;">82%</span>
<div class="abs" style="left:825.9px;top:496.55px;width:34.0px;height:18.2px;background:#95c8e8;border-radius:0 3px 3px 0"></div>
<span class="t" style="left:870.00px;top:500.00px;font-size:11px;line-height:12px;font-weight:400;color:#616161;letter-spacing:0.171px;">$133.3</span>
<span class="t" style="left:1371.00px;top:193.00px;font-size:13px;line-height:15px;font-weight:400;color:#303030;letter-spacing:0.461px;-webkit-text-stroke:0.3px #303030;">Online store sessions</span>
<div class="ul" style="left:1370.5px;top:208.1px;width:135.0px"></div>
<span class="t" style="left:1371.00px;top:224.00px;font-size:20.5px;line-height:23px;font-weight:400;color:#303030;letter-spacing:0.159px;-webkit-text-stroke:0.65px #303030;">14,302</span>
<svg style="left:1444px;top:233.1px" width="6" height="6" viewBox="0 0 6 6"><path d="M0.800 0.800 L4.8 4.8 M1.300 5.1 H5.1 V1.300" fill="none" stroke="#4a4a4a" stroke-width="1.450" stroke-linejoin="miter"/></svg>
<span class="t" style="left:1454.00px;top:231.00px;font-size:11px;line-height:12px;font-weight:700;color:#4a4a4a;letter-spacing:1.142px;">36%</span>
<svg style="left:0;top:0" width="1918" height="946" viewBox="0 0 1918 946"><defs><linearGradient id="g3" x1="0" y1="0" x2="0" y2="1"><stop offset="0" stop-color="#479dcb" stop-opacity="0.075"/><stop offset="1" stop-color="#479dcb" stop-opacity="0.0"/></linearGradient></defs><rect x="1417" y="271.50" width="447.5" height="1" fill="#e9e9e9"/><rect x="1417" y="314.77" width="447.5" height="1" fill="#e9e9e9"/><rect x="1417" y="358.03" width="447.5" height="1" fill="#e9e9e9"/><rect x="1417" y="401.30" width="447.5" height="1" fill="#e9e9e9"/><rect x="1417" y="444.57" width="447.5" height="1" fill="#e9e9e9"/><path d="M1417.00,317.43C1419.51,317.43 1419.51,311.59 1422.02,311.59C1424.53,311.59 1424.53,376.06 1427.04,376.06C1429.56,376.06 1429.56,365.89 1432.07,365.89C1434.58,365.89 1434.58,377.79 1437.09,377.79C1439.60,377.79 1439.60,310.51 1442.11,310.51C1444.62,310.51 1444.62,382.33 1447.13,382.33C1449.65,382.33 1449.65,395.10 1452.16,395.10C1454.67,395.10 1454.67,324.79 1457.18,324.79C1459.69,324.79 1459.69,355.94 1462.20,355.94C1464.71,355.94 1464.71,342.53 1467.22,342.53C1469.74,342.53 1469.74,387.09 1472.25,387.09C1474.76,387.09 1474.76,376.71 1477.27,376.71C1479.78,376.71 1479.78,362.21 1482.29,362.21C1484.80,362.21 1484.80,308.78 1487.31,308.78C1489.83,308.78 1489.83,348.15 1492.34,348.15C1494.85,348.15 1494.85,349.67 1497.36,349.67C1499.87,349.67 1499.87,329.55 1502.38,329.55C1504.89,329.55 1504.89,351.18 1507.40,351.18C1509.92,351.18 1509.92,345.34 1512.43,345.34C1514.94,345.34 1514.94,318.30 1517.45,318.30C1519.96,318.30 1519.96,317.43 1522.47,317.43C1524.98,317.43 1524.98,339.06 1527.49,339.06C1530.01,339.06 1530.01,342.09 1532.52,342.09C1535.03,342.09 1535.03,368.70 1537.54,368.70C1540.05,368.70 1540.05,350.96 1542.56,350.96C1545.07,350.96 1545.07,363.73 1547.58,363.73C1550.10,363.73 1550.10,396.61 1552.61,396.61C1555.12,396.61 1555.12,401.80 1557.63,401.80C1560.14,401.80 1560.14,404.18 1562.65,404.18C1565.16,404.18 1565.16,436.20 1567.67,436.20C1570.19,436.20 1570.19,425.60 1572.70,425.60C1575.21,425.60 1575.21,339.71 1577.72,339.71C1580.23,339.71 1580.23,444.64 1582.74,444.64C1585.25,444.64 1585.25,443.77 1587.76,443.77C1590.28,443.77 1590.28,442.47 1592.79,442.47C1595.30,442.47 1595.30,434.47 1597.81,434.47C1600.32,434.47 1600.32,434.04 1602.83,434.04C1605.34,434.04 1605.34,438.36 1607.85,438.36C1610.37,438.36 1610.37,440.53 1612.88,440.53C1615.39,440.53 1615.39,442.91 1617.90,442.91C1620.41,442.91 1620.41,442.47 1622.92,442.47C1625.43,442.47 1625.43,439.01 1627.94,439.01C1630.46,439.01 1630.46,434.04 1632.97,434.04C1635.48,434.04 1635.48,441.82 1637.99,441.82C1640.50,441.82 1640.50,442.04 1643.01,442.04C1645.52,442.04 1645.52,438.36 1648.03,438.36C1650.54,438.36 1650.54,441.82 1653.06,441.82C1655.57,441.82 1655.57,442.91 1658.08,442.91C1660.59,442.91 1660.59,443.12 1663.10,443.12C1665.61,443.12 1665.61,443.34 1668.12,443.34C1670.63,443.34 1670.63,443.12 1673.15,443.12C1675.66,443.12 1675.66,443.77 1678.17,443.77C1680.68,443.77 1680.68,442.04 1683.19,442.04C1685.70,442.04 1685.70,443.12 1688.21,443.12L1693.24,443.12C1695.75,443.12 1695.75,439.01 1698.26,439.01C1700.77,439.01 1700.77,442.47 1703.28,442.47C1705.79,442.47 1705.79,444.85 1708.30,444.85C1710.81,444.85 1710.81,442.04 1713.33,442.04C1715.84,442.04 1715.84,441.61 1718.35,441.61C1720.86,441.61 1720.86,444.42 1723.37,444.42C1725.88,444.42 1725.88,444.20 1728.39,444.20C1730.90,444.20 1730.90,442.69 1733.42,442.69L1738.44,442.69C1740.95,442.69 1740.95,441.82 1743.46,441.82C1745.97,441.82 1745.97,438.80 1748.48,438.80C1750.99,438.80 1750.99,443.99 1753.51,443.99C1756.02,443.99 1756.02,444.64 1758.53,444.64C1761.04,444.64 1761.04,443.12 1763.55,443.12C1766.06,443.12 1766.06,442.47 1768.57,442.47C1771.08,442.47 1771.08,442.91 1773.60,442.91C1776.11,442.91 1776.11,437.50 1778.62,437.50C1781.13,437.50 1781.13,440.09 1783.64,440.09C1786.15,440.09 1786.15,439.45 1788.66,439.45C1791.17,439.45 1791.17,440.96 1793.69,440.96C1796.20,440.96 1796.20,441.82 1798.71,441.82C1801.22,441.82 1801.22,442.04 1803.73,442.04C1806.24,442.04 1806.24,442.91 1808.75,442.91C1811.26,442.91 1811.26,440.09 1813.78,440.09C1816.29,440.09 1816.29,441.82 1818.80,441.82C1821.31,441.82 1821.31,442.69 1823.82,442.69C1826.33,442.69 1826.33,441.39 1828.84,441.39C1831.35,441.39 1831.35,444.64 1833.87,444.64C1836.38,444.64 1836.38,442.69 1838.89,442.69C1841.40,442.69 1841.40,442.91 1843.91,442.91C1846.42,442.91 1846.42,441.39 1848.93,441.39C1851.44,441.39 1851.44,443.99 1853.96,443.99C1856.47,443.99 1856.47,444.85 1858.98,444.85L1864.00,444.85L1864,445.07L1417,445.07Z" fill="url(#g3)"/><path d="M1417.00,436.20C1419.51,436.20 1419.51,437.28 1422.02,437.28C1424.53,437.28 1424.53,440.53 1427.04,440.53C1429.56,440.53 1429.56,413.48 1432.07,413.48C1434.58,413.48 1434.58,442.47 1437.09,442.47C1439.60,442.47 1439.60,443.56 1442.11,443.56C1444.62,443.56 1444.62,428.84 1447.13,428.84C1449.65,428.84 1449.65,437.28 1452.16,437.28C1454.67,437.28 1454.67,439.01 1457.18,439.01C1459.69,439.01 1459.69,440.53 1462.20,440.53C1464.71,440.53 1464.71,433.60 1467.22,433.60C1469.74,433.60 1469.74,442.91 1472.25,442.91C1474.76,442.91 1474.76,443.56 1477.27,443.56C1479.78,443.56 1479.78,433.60 1482.29,433.60C1484.80,433.60 1484.80,440.53 1487.31,440.53C1489.83,440.53 1489.83,436.20 1492.34,436.20C1494.85,436.20 1494.85,442.47 1497.36,442.47C1499.87,442.47 1499.87,435.12 1502.38,435.12C1504.89,435.12 1504.89,443.56 1507.40,443.56C1509.92,443.56 1509.92,444.20 1512.43,444.20C1514.94,444.20 1514.94,440.53 1517.45,440.53C1519.96,440.53 1519.96,418.24 1522.47,418.24C1524.98,418.24 1524.98,432.96 1527.49,432.96C1530.01,432.96 1530.01,440.96 1532.52,440.96C1535.03,440.96 1535.03,442.04 1537.54,442.04L1542.56,442.04C1545.07,442.04 1545.07,440.53 1547.58,440.53C1550.10,440.53 1550.10,440.09 1552.61,440.09C1555.12,440.09 1555.12,442.04 1557.63,442.04C1560.14,442.04 1560.14,441.39 1562.65,441.39C1565.16,441.39 1565.16,441.82 1567.67,441.82C1570.19,441.82 1570.19,443.56 1572.70,443.56L1577.72,443.56L1582.74,443.56C1585.25,443.56 1585.25,442.91 1587.76,442.91C1590.28,442.91 1590.28,443.56 1592.79,443.56C1595.30,443.56 1595.30,440.53 1597.81,440.53C1600.32,440.53 1600.32,368.70 1602.83,368.70C1605.34,368.70 1605.34,360.05 1607.85,360.05C1610.37,360.05 1610.37,314.83 1612.88,314.83C1615.39,314.83 1615.39,337.98 1617.90,337.98C1620.41,337.98 1620.41,320.03 1622.92,320.03C1625.43,320.03 1625.43,324.14 1627.94,324.14C1630.46,324.14 1630.46,311.59 1632.97,311.59C1635.48,311.59 1635.48,337.98 1637.99,337.98C1640.50,337.98 1640.50,381.25 1643.01,381.25C1645.52,381.25 1645.52,390.12 1648.03,390.12C1650.54,390.12 1650.54,349.67 1653.06,349.67C1655.57,349.67 1655.57,315.70 1658.08,315.70C1660.59,315.70 1660.59,329.55 1663.10,329.55C1665.61,329.55 1665.61,315.27 1668.12,315.27C1670.63,315.27 1670.63,346.42 1673.15,346.42C1675.66,346.42 1675.66,353.78 1678.17,353.78C1680.68,353.78 1680.68,368.70 1683.19,368.70C1685.70,368.70 1685.70,375.63 1688.21,375.63C1690.72,375.63 1690.72,342.09 1693.24,342.09C1695.75,342.09 1695.75,364.38 1698.26,364.38L1703.28,364.38C1705.79,364.38 1705.79,382.76 1708.30,382.76C1710.81,382.76 1710.81,353.78 1713.33,353.78C1715.84,353.78 1715.84,366.54 1718.35,366.54C1720.86,366.54 1720.86,410.24 1723.37,410.24C1725.88,410.24 1725.88,353.78 1728.39,353.78C1730.90,353.78 1730.90,365.89 1733.42,365.89C1735.93,365.89 1735.93,365.46 1738.44,365.46C1740.95,365.46 1740.95,332.57 1743.46,332.57C1745.97,332.57 1745.97,336.25 1748.48,336.25C1750.99,336.25 1750.99,358.10 1753.51,358.10C1756.02,358.10 1756.02,358.53 1758.53,358.53C1761.04,358.53 1761.04,345.34 1763.55,345.34C1766.06,345.34 1766.06,336.25 1768.57,336.25C1771.08,336.25 1771.08,351.61 1773.60,351.61C1776.11,351.61 1776.11,361.13 1778.62,361.13C1781.13,361.13 1781.13,355.94 1783.64,355.94C1786.15,355.94 1786.15,312.67 1788.66,312.67C1791.17,312.67 1791.17,342.09 1793.69,342.09C1796.20,342.09 1796.20,371.08 1798.71,371.08C1801.22,371.08 1801.22,347.93 1803.73,347.93C1806.24,347.93 1806.24,357.02 1808.75,357.02C1811.26,357.02 1811.26,388.61 1813.78,388.61C1816.29,388.61 1816.29,370.65 1818.80,370.65C1821.31,370.65 1821.31,414.57 1823.82,414.57C1826.33,414.57 1826.33,386.66 1828.84,386.66C1831.35,386.66 1831.35,333.22 1833.87,333.22C1836.38,333.22 1836.38,403.53 1838.89,403.53C1841.40,403.53 1841.40,379.09 1843.91,379.09C1846.42,379.09 1846.42,391.85 1848.93,391.85C1851.44,391.85 1851.44,395.96 1853.96,395.96C1856.47,395.96 1856.47,382.98 1858.98,382.98C1861.49,382.98 1861.49,420.41 1864.00,420.41" fill="none" stroke="#8db8cf" stroke-width="1.750" stroke-dasharray="0.1 4" stroke-linecap="round"/><path d="M1417.00,317.43C1419.51,317.43 1419.51,311.59 1422.02,311.59C1424.53,311.59 1424.53,376.06 1427.04,376.06C1429.56,376.06 1429.56,365.89 1432.07,365.89C1434.58,365.89 1434.58,377.79 1437.09,377.79C1439.60,377.79 1439.60,310.51 1442.11,310.51C1444.62,310.51 1444.62,382.33 1447.13,382.33C1449.65,382.33 1449.65,395.10 1452.16,395.10C1454.67,395.10 1454.67,324.79 1457.18,324.79C1459.69,324.79 1459.69,355.94 1462.20,355.94C1464.71,355.94 1464.71,342.53 1467.22,342.53C1469.74,342.53 1469.74,387.09 1472.25,387.09C1474.76,387.09 1474.76,376.71 1477.27,376.71C1479.78,376.71 1479.78,362.21 1482.29,362.21C1484.80,362.21 1484.80,308.78 1487.31,308.78C1489.83,308.78 1489.83,348.15 1492.34,348.15C1494.85,348.15 1494.85,349.67 1497.36,349.67C1499.87,349.67 1499.87,329.55 1502.38,329.55C1504.89,329.55 1504.89,351.18 1507.40,351.18C1509.92,351.18 1509.92,345.34 1512.43,345.34C1514.94,345.34 1514.94,318.30 1517.45,318.30C1519.96,318.30 1519.96,317.43 1522.47,317.43C1524.98,317.43 1524.98,339.06 1527.49,339.06C1530.01,339.06 1530.01,342.09 1532.52,342.09C1535.03,342.09 1535.03,368.70 1537.54,368.70C1540.05,368.70 1540.05,350.96 1542.56,350.96C1545.07,350.96 1545.07,363.73 1547.58,363.73C1550.10,363.73 1550.10,396.61 1552.61,396.61C1555.12,396.61 1555.12,401.80 1557.63,401.80C1560.14,401.80 1560.14,404.18 1562.65,404.18C1565.16,404.18 1565.16,436.20 1567.67,436.20C1570.19,436.20 1570.19,425.60 1572.70,425.60C1575.21,425.60 1575.21,339.71 1577.72,339.71C1580.23,339.71 1580.23,444.64 1582.74,444.64C1585.25,444.64 1585.25,443.77 1587.76,443.77C1590.28,443.77 1590.28,442.47 1592.79,442.47C1595.30,442.47 1595.30,434.47 1597.81,434.47C1600.32,434.47 1600.32,434.04 1602.83,434.04C1605.34,434.04 1605.34,438.36 1607.85,438.36C1610.37,438.36 1610.37,440.53 1612.88,440.53C1615.39,440.53 1615.39,442.91 1617.90,442.91C1620.41,442.91 1620.41,442.47 1622.92,442.47C1625.43,442.47 1625.43,439.01 1627.94,439.01C1630.46,439.01 1630.46,434.04 1632.97,434.04C1635.48,434.04 1635.48,441.82 1637.99,441.82C1640.50,441.82 1640.50,442.04 1643.01,442.04C1645.52,442.04 1645.52,438.36 1648.03,438.36C1650.54,438.36 1650.54,441.82 1653.06,441.82C1655.57,441.82 1655.57,442.91 1658.08,442.91C1660.59,442.91 1660.59,443.12 1663.10,443.12C1665.61,443.12 1665.61,443.34 1668.12,443.34C1670.63,443.34 1670.63,443.12 1673.15,443.12C1675.66,443.12 1675.66,443.77 1678.17,443.77C1680.68,443.77 1680.68,442.04 1683.19,442.04C1685.70,442.04 1685.70,443.12 1688.21,443.12L1693.24,443.12C1695.75,443.12 1695.75,439.01 1698.26,439.01C1700.77,439.01 1700.77,442.47 1703.28,442.47C1705.79,442.47 1705.79,444.85 1708.30,444.85C1710.81,444.85 1710.81,442.04 1713.33,442.04C1715.84,442.04 1715.84,441.61 1718.35,441.61C1720.86,441.61 1720.86,444.42 1723.37,444.42C1725.88,444.42 1725.88,444.20 1728.39,444.20C1730.90,444.20 1730.90,442.69 1733.42,442.69L1738.44,442.69C1740.95,442.69 1740.95,441.82 1743.46,441.82C1745.97,441.82 1745.97,438.80 1748.48,438.80C1750.99,438.80 1750.99,443.99 1753.51,443.99C1756.02,443.99 1756.02,444.64 1758.53,444.64C1761.04,444.64 1761.04,443.12 1763.55,443.12C1766.06,443.12 1766.06,442.47 1768.57,442.47C1771.08,442.47 1771.08,442.91 1773.60,442.91C1776.11,442.91 1776.11,437.50 1778.62,437.50C1781.13,437.50 1781.13,440.09 1783.64,440.09C1786.15,440.09 1786.15,439.45 1788.66,439.45C1791.17,439.45 1791.17,440.96 1793.69,440.96C1796.20,440.96 1796.20,441.82 1798.71,441.82C1801.22,441.82 1801.22,442.04 1803.73,442.04C1806.24,442.04 1806.24,442.91 1808.75,442.91C1811.26,442.91 1811.26,440.09 1813.78,440.09C1816.29,440.09 1816.29,441.82 1818.80,441.82C1821.31,441.82 1821.31,442.69 1823.82,442.69C1826.33,442.69 1826.33,441.39 1828.84,441.39C1831.35,441.39 1831.35,444.64 1833.87,444.64C1836.38,444.64 1836.38,442.69 1838.89,442.69C1841.40,442.69 1841.40,442.91 1843.91,442.91C1846.42,442.91 1846.42,441.39 1848.93,441.39C1851.44,441.39 1851.44,443.99 1853.96,443.99C1856.47,443.99 1856.47,444.85 1858.98,444.85L1864.00,444.85" fill="none" stroke="#479dcb" stroke-width="2" stroke-linejoin="round" stroke-linecap="butt"/><rect x="1486" y="502.3" width="12.500" height="2" rx="1" fill="#479dcb"/><path d="M1624.5,503.3h12" fill="none" stroke="#8db8cf" stroke-width="1.750" stroke-dasharray="0.1 4" stroke-linecap="round"/></svg>
<span class="t" style="left:1373.00px;top:265.00px;font-size:11px;line-height:12px;font-weight:400;color:#616161;letter-spacing:0.973px;">800</span>
<span class="t" style="left:1373.00px;top:308.00px;font-size:11px;line-height:12px;font-weight:400;color:#616161;letter-spacing:0.973px;">600</span>
<span class="t" style="left:1373.00px;top:352.00px;font-size:11px;line-height:12px;font-weight:400;color:#616161;letter-spacing:1.073px;">400</span>
<span class="t" style="left:1373.00px;top:395.00px;font-size:11px;line-height:12px;font-weight:400;color:#616161;letter-spacing:0.973px;">200</span>
<span class="t" style="left:1373.00px;top:438.00px;font-size:11px;line-height:12px;font-weight:400;color:#616161;">0</span>
<span class="t" style="left:1402.00px;top:460.00px;font-size:11px;line-height:12px;font-weight:400;color:#616161;letter-spacing:0.431px;">Aug 5</span>
<span class="t" style="left:1465.00px;top:460.00px;font-size:11px;line-height:12px;font-weight:400;color:#616161;letter-spacing:0.139px;">Aug 18</span>
<span class="t" style="left:1530.00px;top:460.00px;font-size:11px;line-height:12px;font-weight:400;color:#616161;letter-spacing:0.139px;">Aug 31</span>
<span class="t" style="left:1595.00px;top:460.00px;font-size:11px;line-height:12px;font-weight:400;color:#616161;letter-spacing:0.139px;">Sep 13</span>
<span class="t" style="left:1660.00px;top:460.00px;font-size:11px;line-height:12px;font-weight:400;color:#616161;letter-spacing:0.139px;">Sep 26</span>
<span class="t" style="left:1730.00px;top:460.00px;font-size:11px;line-height:12px;font-weight:400;color:#616161;letter-spacing:0.394px;">Oct 9</span>
<span class="t" style="left:1792.00px;top:460.00px;font-size:11px;line-height:12px;font-weight:400;color:#616161;letter-spacing:0.130px;">Oct 22</span>
<span class="t" style="left:1506.00px;top:497.00px;font-size:11px;line-height:12px;font-weight:400;color:#616161;letter-spacing:0.320px;">Aug 5–Nov 2, 2024</span>
<span class="t" style="left:1644.00px;top:497.00px;font-size:11px;line-height:12px;font-weight:400;color:#616161;letter-spacing:0.306px;">May 7–Aug 4, 2024</span>
<span class="t" style="left:280.00px;top:563.00px;font-size:13px;line-height:15px;font-weight:400;color:#303030;letter-spacing:0.460px;-webkit-text-stroke:0.3px #303030;">Online store conversion rate</span>
<div class="ul" style="left:279.5px;top:578.2px;width:176.5px"></div>
<span class="t" style="left:280.00px;top:594.00px;font-size:20.5px;line-height:23px;font-weight:400;color:#303030;letter-spacing:0.793px;-webkit-text-stroke:0.65px #303030;">0.03%</span>
<svg style="left:351px;top:603.1px" width="6" height="6" viewBox="0 0 6 6"><path d="M0.800 5.2 L4.8 1.200 M1.300 0.900 H5.1 V4.7" fill="none" stroke="#13805a" stroke-width="1.450" stroke-linejoin="miter"/></svg>
<span class="t" style="left:361.00px;top:601.00px;font-size:11px;line-height:12px;font-weight:700;color:#13805a;letter-spacing:0.355px;">160%</span>
<span class="t" style="left:280.00px;top:652.00px;font-size:13px;line-height:15px;font-weight:400;color:#303030;letter-spacing:0.523px;">Added to cart</span>
<span class="t" style="left:280.00px;top:672.00px;font-size:13px;line-height:15px;font-weight:400;color:#616161;letter-spacing:0.335px;">27 sessions</span>
<span class="t" style="left:626.00px;top:662.00px;font-size:13px;line-height:15px;font-weight:400;color:#303030;letter-spacing:-0.415px;">0.19%</span>
<svg style="left:745.9px;top:666.1px" width="6" height="6" viewBox="0 0 6 6"><path d="M0.800 5.2 L4.8 1.200 M1.300 0.900 H5.1 V4.7" fill="none" stroke="#13805a" stroke-width="1.450" stroke-linejoin="miter"/></svg>
<span class="t" style="left:756.00px;top:664.00px;font-size:11px;line-height:12px;font-weight:700;color:#13805a;letter-spacing:0.142px;">14%</span>
<span class="t" style="left:280.00px;top:717.00px;font-size:13px;line-height:15px;font-weight:400;color:#303030;letter-spacing:0.421px;">Reached checkout</span>
<span class="t" style="left:280.00px;top:737.00px;font-size:13px;line-height:15px;font-weight:400;color:#616161;letter-spacing:0.205px;">10 sessions</span>
<span class="t" style="left:623.00px;top:727.00px;font-size:13px;line-height:15px;font-weight:400;color:#303030;letter-spacing:0.335px;">0.07%</span>
<svg style="left:745px;top:731.0px" width="6" height="6" viewBox="0 0 6 6"><path d="M0.800 5.2 L4.8 1.200 M1.300 0.900 H5.1 V4.7" fill="none" stroke="#13805a" stroke-width="1.450" stroke-linejoin="miter"/></svg>
<span class="t" style="left:755.00px;top:729.00px;font-size:11px;line-height:12px;font-weight:700;color:#13805a;letter-spacing:0.592px;">74%</span>
<span class="t" style="left:280.00px;top:782.00px;font-size:13px;line-height:15px;font-weight:400;color:#303030;letter-spacing:0.444px;">Sessions converted</span>
<span class="t" style="left:280.00px;top:802.00px;font-size:13px;line-height:15px;font-weight:400;color:#616161;letter-spacing:0.364px;">5 sessions</span>
<span class="t" style="left:622.00px;top:792.00px;font-size:13px;line-height:15px;font-weight:400;color:#303030;letter-spacing:0.535px;">0.03%</span>
<svg style="left:739px;top:795.9000000000001px" width="6" height="6" viewBox="0 0 6 6"><path d="M0.800 5.2 L4.8 1.200 M1.300 0.900 H5.1 V4.7" fill="none" stroke="#13805a" stroke-width="1.450" stroke-linejoin="miter"/></svg>
<span class="t" style="left:749.00px;top:794.00px;font-size:11px;line-height:12px;font-weight:700;color:#13805a;letter-spacing:0.355px;">160%</span>
<div class="abs" style="left:265px;top:701px;width:528px;height:1px;background:#e3e3e3"></div>
<div class="abs" style="left:265px;top:766px;width:528px;height:1px;background:#e3e3e3"></div>
<span class="t" style="left:826.00px;top:563.00px;font-size:13px;line-height:15px;font-weight:400;color:#303030;letter-spacing:0.507px;-webkit-text-stroke:0.3px #303030;">Total orders</span>
<div class="ul" style="left:825.5px;top:578.2px;width:75.0px"></div>
<span class="t" style="left:826.00px;top:594.00px;font-size:20.5px;line-height:23px;font-weight:400;color:#303030;letter-spacing:1.197px;-webkit-text-stroke:0.65px #303030;">89</span>
<svg style="left:858.7px;top:603.1px" width="6" height="6" viewBox="0 0 6 6"><path d="M0.800 5.2 L4.8 1.200 M1.300 0.900 H5.1 V4.7" fill="none" stroke="#13805a" stroke-width="1.450" stroke-linejoin="miter"/></svg>
<span class="t" style="left:868.00px;top:601.00px;font-size:11px;line-height:12px;font-weight:700;color:#13805a;letter-spacing:-0.358px;">71%</span>
<svg style="left:0;top:0" width="1918" height="946" viewBox="0 0 1918 946"><defs><linearGradient id="g5" x1="0" y1="0" x2="0" y2="1"><stop offset="0" stop-color="#479dcb" stop-opacity="0.075"/><stop offset="1" stop-color="#479dcb" stop-opacity="0.0"/></linearGradient></defs><rect x="858" y="641.50" width="462.5" height="1" fill="#e9e9e9"/><rect x="858" y="684.77" width="462.5" height="1" fill="#e9e9e9"/><rect x="858" y="728.03" width="462.5" height="1" fill="#e9e9e9"/><rect x="858" y="771.30" width="462.5" height="1" fill="#e9e9e9"/><rect x="858" y="814.57" width="462.5" height="1" fill="#e9e9e9"/><path d="M858.00,815.07L863.19,815.07L868.38,815.07C870.98,815.07 870.98,793.44 873.57,793.44C876.17,793.44 876.17,815.07 878.76,815.07C881.36,815.07 881.36,793.44 883.96,793.44C886.55,793.44 886.55,815.07 889.15,815.07C891.74,815.07 891.74,793.44 894.34,793.44L899.53,793.44C902.12,793.44 902.12,815.07 904.72,815.07C907.31,815.07 907.31,793.44 909.91,793.44C912.51,793.44 912.51,815.07 915.10,815.07L920.29,815.07C922.89,815.07 922.89,793.44 925.48,793.44C928.08,793.44 928.08,815.07 930.67,815.07C933.27,815.07 933.27,793.44 935.87,793.44C938.46,793.44 938.46,815.07 941.06,815.07L946.25,815.07C948.84,815.07 948.84,793.44 951.44,793.44L956.63,793.44C959.22,793.44 959.22,815.07 961.82,815.07C964.42,815.07 964.42,750.17 967.01,750.17L972.20,750.17C974.80,750.17 974.80,815.07 977.39,815.07C979.99,815.07 979.99,793.44 982.58,793.44L987.78,793.44C990.37,793.44 990.37,815.07 992.97,815.07L998.16,815.07L1003.35,815.07L1008.54,815.07C1011.13,815.07 1011.13,728.54 1013.73,728.54C1016.33,728.54 1016.33,815.07 1018.92,815.07C1021.52,815.07 1021.52,771.80 1024.11,771.80C1026.71,771.80 1026.71,815.07 1029.30,815.07L1034.49,815.07C1037.09,815.07 1037.09,750.17 1039.69,750.17L1044.88,750.17L1050.07,750.17C1052.66,750.17 1052.66,793.44 1055.26,793.44C1057.85,793.44 1057.85,771.80 1060.45,771.80C1063.04,771.80 1063.04,793.44 1065.64,793.44C1068.24,793.44 1068.24,815.07 1070.83,815.07C1073.43,815.07 1073.43,750.17 1076.02,750.17C1078.62,750.17 1078.62,815.07 1081.21,815.07C1083.81,815.07 1083.81,728.54 1086.40,728.54C1089.00,728.54 1089.00,815.07 1091.60,815.07L1096.79,815.07L1101.98,815.07C1104.57,815.07 1104.57,771.80 1107.17,771.80C1109.76,771.80 1109.76,815.07 1112.36,815.07C1114.96,815.07 1114.96,793.44 1117.55,793.44L1122.74,793.44C1125.34,793.44 1125.34,815.07 1127.93,815.07L1133.12,815.07C1135.72,815.07 1135.72,750.17 1138.31,750.17C1140.91,750.17 1140.91,793.44 1143.51,793.44C1146.10,793.44 1146.10,815.07 1148.70,815.07C1151.29,815.07 1151.29,750.17 1153.89,750.17C1156.48,750.17 1156.48,771.80 1159.08,771.80C1161.67,771.80 1161.67,793.44 1164.27,793.44C1166.87,793.44 1166.87,663.63 1169.46,663.63C1172.06,663.63 1172.06,815.07 1174.65,815.07C1177.25,815.07 1177.25,750.17 1179.84,750.17C1182.44,750.17 1182.44,815.07 1185.03,815.07L1190.22,815.07L1195.42,815.07L1200.61,815.07C1203.20,815.07 1203.20,771.80 1205.80,771.80C1208.39,771.80 1208.39,728.54 1210.99,728.54C1213.58,728.54 1213.58,815.07 1216.18,815.07C1218.78,815.07 1218.78,706.90 1221.37,706.90C1223.97,706.90 1223.97,793.44 1226.56,793.44C1229.16,793.44 1229.16,815.07 1231.75,815.07L1236.94,815.07C1239.54,815.07 1239.54,793.44 1242.13,793.44C1244.73,793.44 1244.73,815.07 1247.33,815.07C1249.92,815.07 1249.92,771.80 1252.52,771.80L1257.71,771.80C1260.30,771.80 1260.30,815.07 1262.90,815.07C1265.49,815.07 1265.49,793.44 1268.09,793.44C1270.69,793.44 1270.69,815.07 1273.28,815.07L1278.47,815.07L1283.66,815.07C1286.26,815.07 1286.26,771.80 1288.85,771.80C1291.45,771.80 1291.45,815.07 1294.04,815.07C1296.64,815.07 1296.64,771.80 1299.24,771.80C1301.83,771.80 1301.83,815.07 1304.43,815.07L1309.62,815.07L1314.81,815.07L1320.00,815.07L1320,815.07L858,815.07Z" fill="url(#g5)"/><path d="M858.00,750.17C860.60,750.17 860.60,815.07 863.19,815.07L868.38,815.07L873.57,815.07L878.76,815.07L883.96,815.07L889.15,815.07L894.34,815.07L899.53,815.07L904.72,815.07L909.91,815.07L915.10,815.07L920.29,815.07L925.48,815.07C928.08,815.07 928.08,793.44 930.67,793.44L935.87,793.44C938.46,793.44 938.46,815.07 941.06,815.07L946.25,815.07L951.44,815.07L956.63,815.07L961.82,815.07L967.01,815.07L972.20,815.07C974.80,815.07 974.80,793.44 977.39,793.44L982.58,793.44C985.18,793.44 985.18,815.07 987.78,815.07C990.37,815.07 990.37,706.90 992.97,706.90C995.56,706.90 995.56,815.07 998.16,815.07L1003.35,815.07C1005.94,815.07 1005.94,706.90 1008.54,706.90C1011.13,706.90 1011.13,815.07 1013.73,815.07L1018.92,815.07L1024.11,815.07L1029.30,815.07L1034.49,815.07L1039.69,815.07L1044.88,815.07C1047.47,815.07 1047.47,750.17 1050.07,750.17C1052.66,750.17 1052.66,815.07 1055.26,815.07C1057.85,815.07 1057.85,793.44 1060.45,793.44L1065.64,793.44C1068.24,793.44 1068.24,815.07 1070.83,815.07L1076.02,815.07L1081.21,815.07C1083.81,815.07 1083.81,771.80 1086.40,771.80C1089.00,771.80 1089.00,815.07 1091.60,815.07L1096.79,815.07L1101.98,815.07L1107.17,815.07L1112.36,815.07L1117.55,815.07L1122.74,815.07L1127.93,815.07L1133.12,815.07C1135.72,815.07 1135.72,685.27 1138.31,685.27C1140.91,685.27 1140.91,815.07 1143.51,815.07L1148.70,815.07L1153.89,815.07L1159.08,815.07L1164.27,815.07L1169.46,815.07C1172.06,815.07 1172.06,793.44 1174.65,793.44L1179.84,793.44C1182.44,793.44 1182.44,771.80 1185.03,771.80C1187.63,771.80 1187.63,815.07 1190.22,815.07L1195.42,815.07L1200.61,815.07C1203.20,815.07 1203.20,771.80 1205.80,771.80C1208.39,771.80 1208.39,815.07 1210.99,815.07L1216.18,815.07C1218.78,815.07 1218.78,793.44 1221.37,793.44C1223.97,793.44 1223.97,815.07 1226.56,815.07L1231.75,815.07C1234.35,815.07 1234.35,771.80 1236.94,771.80C1239.54,771.80 1239.54,793.44 1242.13,793.44C1244.73,793.44 1244.73,815.07 1247.33,815.07L1252.52,815.07C1255.11,815.07 1255.11,793.44 1257.71,793.44C1260.30,793.44 1260.30,815.07 1262.90,815.07C1265.49,815.07 1265.49,771.80 1268.09,771.80C1270.69,771.80 1270.69,815.07 1273.28,815.07L1278.47,815.07L1283.66,815.07C1286.26,815.07 1286.26,793.44 1288.85,793.44C1291.45,793.44 1291.45,750.17 1294.04,750.17C1296.64,750.17 1296.64,793.44 1299.24,793.44C1301.83,793.44 1301.83,815.07 1304.43,815.07L1309.62,815.07C1312.21,815.07 1312.21,793.44 1314.81,793.44C1317.40,793.44 1317.40,815.07 1320.00,815.07" fill="none" stroke="#8db8cf" stroke-width="1.750" stroke-dasharray="0.1 4" stroke-linecap="round"/><path d="M858.00,815.07L863.19,815.07L868.38,815.07C870.98,815.07 870.98,793.44 873.57,793.44C876.17,793.44 876.17,815.07 878.76,815.07C881.36,815.07 881.36,793.44 883.96,793.44C886.55,793.44 886.55,815.07 889.15,815.07C891.74,815.07 891.74,793.44 894.34,793.44L899.53,793.44C902.12,793.44 902.12,815.07 904.72,815.07C907.31,815.07 907.31,793.44 909.91,793.44C912.51,793.44 912.51,815.07 915.10,815.07L920.29,815.07C922.89,815.07 922.89,793.44 925.48,793.44C928.08,793.44 928.08,815.07 930.67,815.07C933.27,815.07 933.27,793.44 935.87,793.44C938.46,793.44 938.46,815.07 941.06,815.07L946.25,815.07C948.84,815.07 948.84,793.44 951.44,793.44L956.63,793.44C959.22,793.44 959.22,815.07 961.82,815.07C964.42,815.07 964.42,750.17 967.01,750.17L972.20,750.17C974.80,750.17 974.80,815.07 977.39,815.07C979.99,815.07 979.99,793.44 982.58,793.44L987.78,793.44C990.37,793.44 990.37,815.07 992.97,815.07L998.16,815.07L1003.35,815.07L1008.54,815.07C1011.13,815.07 1011.13,728.54 1013.73,728.54C1016.33,728.54 1016.33,815.07 1018.92,815.07C1021.52,815.07 1021.52,771.80 1024.11,771.80C1026.71,771.80 1026.71,815.07 1029.30,815.07L1034.49,815.07C1037.09,815.07 1037.09,750.17 1039.69,750.17L1044.88,750.17L1050.07,750.17C1052.66,750.17 1052.66,793.44 1055.26,793.44C1057.85,793.44 1057.85,771.80 1060.45,771.80C1063.04,771.80 1063.04,793.44 1065.64,793.44C1068.24,793.44 1068.24,815.07 1070.83,815.07C1073.43,815.07 1073.43,750.17 1076.02,750.17C1078.62,750.17 1078.62,815.07 1081.21,815.07C1083.81,815.07 1083.81,728.54 1086.40,728.54C1089.00,728.54 1089.00,815.07 1091.60,815.07L1096.79,815.07L1101.98,815.07C1104.57,815.07 1104.57,771.80 1107.17,771.80C1109.76,771.80 1109.76,815.07 1112.36,815.07C1114.96,815.07 1114.96,793.44 1117.55,793.44L1122.74,793.44C1125.34,793.44 1125.34,815.07 1127.93,815.07L1133.12,815.07C1135.72,815.07 1135.72,750.17 1138.31,750.17C1140.91,750.17 1140.91,793.44 1143.51,793.44C1146.10,793.44 1146.10,815.07 1148.70,815.07C1151.29,815.07 1151.29,750.17 1153.89,750.17C1156.48,750.17 1156.48,771.80 1159.08,771.80C1161.67,771.80 1161.67,793.44 1164.27,793.44C1166.87,793.44 1166.87,663.63 1169.46,663.63C1172.06,663.63 1172.06,815.07 1174.65,815.07C1177.25,815.07 1177.25,750.17 1179.84,750.17C1182.44,750.17 1182.44,815.07 1185.03,815.07L1190.22,815.07L1195.42,815.07L1200.61,815.07C1203.20,815.07 1203.20,771.80 1205.80,771.80C1208.39,771.80 1208.39,728.54 1210.99,728.54C1213.58,728.54 1213.58,815.07 1216.18,815.07C1218.78,815.07 1218.78,706.90 1221.37,706.90C1223.97,706.90 1223.97,793.44 1226.56,793.44C1229.16,793.44 1229.16,815.07 1231.75,815.07L1236.94,815.07C1239.54,815.07 1239.54,793.44 1242.13,793.44C1244.73,793.44 1244.73,815.07 1247.33,815.07C1249.92,815.07 1249.92,771.80 1252.52,771.80L1257.71,771.80C1260.30,771.80 1260.30,815.07 1262.90,815.07C1265.49,815.07 1265.49,793.44 1268.09,793.44C1270.69,793.44 1270.69,815.07 1273.28,815.07L1278.47,815.07L1283.66,815.07C1286.26,815.07 1286.26,771.80 1288.85,771.80C1291.45,771.80 1291.45,815.07 1294.04,815.07C1296.64,815.07 1296.64,771.80 1299.24,771.80C1301.83,771.80 1301.83,815.07 1304.43,815.07L1309.62,815.07L1314.81,815.07L1320.00,815.07" fill="none" stroke="#479dcb" stroke-width="2" stroke-linejoin="round" stroke-linecap="butt"/><rect x="941" y="872.3" width="12.500" height="2" rx="1" fill="#479dcb"/><path d="M1079.5,873.3h12" fill="none" stroke="#8db8cf" stroke-width="1.750" stroke-dasharray="0.1 4" stroke-linecap="round"/></svg>
<span class="t" style="left:828.00px;top:635.00px;font-size:11px;line-height:12px;font-weight:400;color:#616161;">8</span>
<span class="t" style="left:828.00px;top:678.00px;font-size:11px;line-height:12px;font-weight:400;color:#616161;">6</span>
<span class="t" style="left:828.00px;top:722.00px;font-size:11px;line-height:12px;font-weight:400;color:#616161;">4</span>
<span class="t" style="left:828.00px;top:765.00px;font-size:11px;line-height:12px;font-weight:400;color:#616161;">2</span>
<span class="t" style="left:828.00px;top:808.00px;font-size:11px;line-height:12px;font-weight:400;color:#616161;">0</span>
<span class="t" style="left:843.00px;top:830.00px;font-size:11px;line-height:12px;font-weight:400;color:#616161;letter-spacing:0.431px;">Aug 5</span>
<span class="t" style="left:903.00px;top:830.00px;font-size:11px;line-height:12px;font-weight:400;color:#616161;letter-spacing:0.139px;">Aug 17</span>
<span class="t" style="left:965.00px;top:830.00px;font-size:11px;line-height:12px;font-weight:400;color:#616161;letter-spacing:0.139px;">Aug 29</span>
<span class="t" style="left:1027.00px;top:830.00px;font-size:11px;line-height:12px;font-weight:400;color:#616161;letter-spacing:0.139px;">Sep 10</span>
<span class="t" style="left:1089.00px;top:830.00px;font-size:11px;line-height:12px;font-weight:400;color:#616161;letter-spacing:0.139px;">Sep 22</span>
<span class="t" style="left:1156.00px;top:830.00px;font-size:11px;line-height:12px;font-weight:400;color:#616161;letter-spacing:0.394px;">Oct 4</span>
<span class="t" style="left:1215.00px;top:830.00px;font-size:11px;line-height:12px;font-weight:400;color:#616161;letter-spacing:0.130px;">Oct 16</span>
<span class="t" style="left:1278.00px;top:830.00px;font-size:11px;line-height:12px;font-weight:400;color:#616161;letter-spacing:0.130px;">Oct 28</span>
<span class="t" style="left:961.00px;top:867.00px;font-size:11px;line-height:12px;font-weight:400;color:#616161;letter-spacing:0.320px;">Aug 5–Nov 2, 2024</span>
<span class="t" style="left:1099.00px;top:867.00px;font-size:11px;line-height:12px;font-weight:400;color:#616161;letter-spacing:0.306px;">May 7–Aug 4, 2024</span>
<span class="t" style="left:1371.00px;top:563.00px;font-size:13px;line-height:15px;font-weight:400;color:#303030;letter-spacing:0.481px;-webkit-text-stroke:0.3px #303030;">Average order value</span>
<div class="ul" style="left:1370.5px;top:578.2px;width:127.0px"></div>
<span class="t" style="left:1371.00px;top:594.00px;font-size:20.5px;line-height:23px;font-weight:400;color:#303030;letter-spacing:1.059px;-webkit-text-stroke:0.65px #303030;">$24.95</span>
<svg style="left:1448px;top:603.1px" width="6" height="6" viewBox="0 0 6 6"><path d="M0.800 0.800 L4.8 4.8 M1.300 5.1 H5.1 V1.300" fill="none" stroke="#4a4a4a" stroke-width="1.450" stroke-linejoin="miter"/></svg>
<span class="t" style="left:1458.00px;top:601.00px;font-size:11px;line-height:12px;font-weight:700;color:#4a4a4a;letter-spacing:0.792px;">33%</span>
<svg style="left:0;top:0" width="1918" height="946" viewBox="0 0 1918 946"><defs><linearGradient id="g6" x1="0" y1="0" x2="0" y2="1"><stop offset="0" stop-color="#479dcb" stop-opacity="0.075"/><stop offset="1" stop-color="#479dcb" stop-opacity="0.0"/></linearGradient></defs><rect x="1423" y="641.50" width="441.5" height="1" fill="#e9e9e9"/><rect x="1423" y="699.20" width="441.5" height="1" fill="#e9e9e9"/><rect x="1423" y="756.90" width="441.5" height="1" fill="#e9e9e9"/><rect x="1423" y="814.57" width="441.5" height="1" fill="#e9e9e9"/><path d="M1423.00,815.07L1427.96,815.07L1432.91,815.07C1435.39,815.07 1435.39,789.34 1437.87,789.34C1440.34,789.34 1440.34,815.07 1442.82,815.07C1445.30,815.07 1445.30,711.80 1447.78,711.80C1450.25,711.80 1450.25,815.07 1452.73,815.07C1455.21,815.07 1455.21,786.80 1457.69,786.80C1460.16,786.80 1460.16,789.69 1462.64,789.69C1465.12,789.69 1465.12,815.07 1467.60,815.07C1470.07,815.07 1470.07,785.65 1472.55,785.65C1475.03,785.65 1475.03,815.07 1477.51,815.07L1482.46,815.07C1484.94,815.07 1484.94,763.50 1487.42,763.50C1489.89,763.50 1489.89,815.07 1492.37,815.07C1494.85,815.07 1494.85,788.19 1497.33,788.19C1499.80,788.19 1499.80,815.07 1502.28,815.07L1507.24,815.07C1509.71,815.07 1509.71,802.38 1512.19,802.38C1514.67,802.38 1514.67,769.26 1517.15,769.26C1519.62,769.26 1519.62,815.07 1522.10,815.07C1524.58,815.07 1524.58,796.61 1527.06,796.61C1529.53,796.61 1529.53,775.61 1532.01,775.61C1534.49,775.61 1534.49,815.07 1536.97,815.07C1539.44,815.07 1539.44,800.88 1541.92,800.88C1544.40,800.88 1544.40,802.38 1546.88,802.38C1549.35,802.38 1549.35,815.07 1551.83,815.07L1556.79,815.07L1561.74,815.07L1566.70,815.07C1569.17,815.07 1569.17,780.46 1571.65,780.46C1574.13,780.46 1574.13,815.07 1576.61,815.07C1579.08,815.07 1579.08,792.46 1581.56,792.46C1584.04,792.46 1584.04,815.07 1586.52,815.07L1591.47,815.07C1593.95,815.07 1593.95,791.42 1596.43,791.42C1598.90,791.42 1598.90,755.53 1601.38,755.53C1603.86,755.53 1603.86,769.26 1606.34,769.26C1608.81,769.26 1608.81,800.88 1611.29,800.88C1613.77,800.88 1613.77,763.50 1616.25,763.50C1618.72,763.50 1618.72,796.61 1621.20,796.61C1623.68,796.61 1623.68,815.07 1626.16,815.07C1628.63,815.07 1628.63,795.69 1631.11,795.69C1633.59,795.69 1633.59,815.07 1636.07,815.07C1638.54,815.07 1638.54,793.15 1641.02,793.15C1643.50,793.15 1643.50,815.07 1645.98,815.07L1650.93,815.07L1655.89,815.07C1658.37,815.07 1658.37,804.11 1660.84,804.11C1663.32,804.11 1663.32,815.07 1665.80,815.07C1668.28,815.07 1668.28,789.34 1670.75,789.34C1673.23,789.34 1673.23,757.38 1675.71,757.38C1678.19,757.38 1678.19,815.07 1680.66,815.07L1685.62,815.07C1688.10,815.07 1688.10,800.53 1690.57,800.53C1693.05,800.53 1693.05,800.88 1695.53,800.88C1698.01,800.88 1698.01,815.07 1700.48,815.07C1702.96,815.07 1702.96,792.46 1705.44,792.46C1707.92,792.46 1707.92,804.11 1710.39,804.11C1712.87,804.11 1712.87,803.53 1715.35,803.53C1717.83,803.53 1717.83,796.26 1720.30,796.26C1722.78,796.26 1722.78,815.07 1725.26,815.07C1727.74,815.07 1727.74,787.61 1730.21,787.61C1732.69,787.61 1732.69,815.07 1735.17,815.07L1740.12,815.07L1745.08,815.07L1750.03,815.07C1752.51,815.07 1752.51,757.61 1754.99,757.61C1757.47,757.61 1757.47,795.69 1759.94,795.69C1762.42,795.69 1762.42,815.07 1764.90,815.07C1767.38,815.07 1767.38,796.61 1769.85,796.61C1772.33,796.61 1772.33,748.15 1774.81,748.15C1777.29,748.15 1777.29,815.07 1779.76,815.07L1784.72,815.07C1787.20,815.07 1787.20,745.96 1789.67,745.96C1792.15,745.96 1792.15,815.07 1794.63,815.07C1797.11,815.07 1797.11,789.34 1799.58,789.34C1802.06,789.34 1802.06,798.92 1804.54,798.92C1807.02,798.92 1807.02,815.07 1809.49,815.07C1811.97,815.07 1811.97,786.80 1814.45,786.80C1816.93,786.80 1816.93,815.07 1819.40,815.07L1824.36,815.07L1829.31,815.07C1831.79,815.07 1831.79,789.34 1834.27,789.34C1836.75,789.34 1836.75,815.07 1839.22,815.07C1841.70,815.07 1841.70,784.03 1844.18,784.03C1846.66,784.03 1846.66,815.07 1849.13,815.07L1854.09,815.07L1859.04,815.07L1864.00,815.07L1864,815.07L1423,815.07Z" fill="url(#g6)"/><path d="M1423.00,741.80C1425.48,741.80 1425.48,815.07 1427.96,815.07L1432.91,815.07L1437.87,815.07L1442.82,815.07L1447.78,815.07L1452.73,815.07L1457.69,815.07L1462.64,815.07L1467.60,815.07L1472.55,815.07L1477.51,815.07L1482.46,815.07L1487.42,815.07C1489.89,815.07 1489.89,776.99 1492.37,776.99C1494.85,776.99 1494.85,696.23 1497.33,696.23C1499.80,696.23 1499.80,815.07 1502.28,815.07L1507.24,815.07L1512.19,815.07L1517.15,815.07L1522.10,815.07L1527.06,815.07L1532.01,815.07C1534.49,815.07 1534.49,787.38 1536.97,787.38C1539.44,787.38 1539.44,805.84 1541.92,805.84C1544.40,805.84 1544.40,815.07 1546.88,815.07C1549.35,815.07 1549.35,771.92 1551.83,771.92C1554.31,771.92 1554.31,815.07 1556.79,815.07L1561.74,815.07C1564.22,815.07 1564.22,767.07 1566.70,767.07C1569.17,767.07 1569.17,815.07 1571.65,815.07L1576.61,815.07L1581.56,815.07L1586.52,815.07L1591.47,815.07L1596.43,815.07L1601.38,815.07C1603.86,815.07 1603.86,713.54 1606.34,713.54C1608.81,713.54 1608.81,815.07 1611.29,815.07C1613.77,815.07 1613.77,791.99 1616.25,791.99C1618.72,791.99 1618.72,782.76 1621.20,782.76C1623.68,782.76 1623.68,815.07 1626.16,815.07L1631.11,815.07C1633.59,815.07 1633.59,789.69 1636.07,789.69C1638.54,789.69 1638.54,797.76 1641.02,797.76C1643.50,797.76 1643.50,815.07 1645.98,815.07L1650.93,815.07L1655.89,815.07L1660.84,815.07L1665.80,815.07L1670.75,815.07L1675.71,815.07L1680.66,815.07L1685.62,815.07C1688.10,815.07 1688.10,794.53 1690.57,794.53C1693.05,794.53 1693.05,815.07 1695.53,815.07L1700.48,815.07L1705.44,815.07L1710.39,815.07L1715.35,815.07L1720.30,815.07C1722.78,815.07 1722.78,768.23 1725.26,768.23C1727.74,768.23 1727.74,769.26 1730.21,769.26C1732.69,769.26 1732.69,781.96 1735.17,781.96C1737.65,781.96 1737.65,815.07 1740.12,815.07L1745.08,815.07L1750.03,815.07C1752.51,815.07 1752.51,760.84 1754.99,760.84C1757.47,760.84 1757.47,815.07 1759.94,815.07C1762.42,815.07 1762.42,787.38 1764.90,787.38C1767.38,787.38 1767.38,790.84 1769.85,790.84C1772.33,790.84 1772.33,815.07 1774.81,815.07L1779.76,815.07C1782.24,815.07 1782.24,766.61 1784.72,766.61C1787.20,766.61 1787.20,745.84 1789.67,745.84C1792.15,745.84 1792.15,815.07 1794.63,815.07L1799.58,815.07C1802.06,815.07 1802.06,779.76 1804.54,779.76C1807.02,779.76 1807.02,815.07 1809.49,815.07C1811.97,815.07 1811.97,791.99 1814.45,791.99C1816.93,791.99 1816.93,815.07 1819.40,815.07L1824.36,815.07L1829.31,815.07C1831.79,815.07 1831.79,711.80 1834.27,711.80C1836.75,711.80 1836.75,787.38 1839.22,787.38C1841.70,787.38 1841.70,791.99 1844.18,791.99C1846.66,791.99 1846.66,815.07 1849.13,815.07L1854.09,815.07C1856.57,815.07 1856.57,785.65 1859.04,785.65C1861.52,785.65 1861.52,815.07 1864.00,815.07" fill="none" stroke="#8db8cf" stroke-width="1.750" stroke-dasharray="0.1 4" stroke-linecap="round"/><path d="M1423.00,815.07L1427.96,815.07L1432.91,815.07C1435.39,815.07 1435.39,789.34 1437.87,789.34C1440.34,789.34 1440.34,815.07 1442.82,815.07C1445.30,815.07 1445.30,711.80 1447.78,711.80C1450.25,711.80 1450.25,815.07 1452.73,815.07C1455.21,815.07 1455.21,786.80 1457.69,786.80C1460.16,786.80 1460.16,789.69 1462.64,789.69C1465.12,789.69 1465.12,815.07 1467.60,815.07C1470.07,815.07 1470.07,785.65 1472.55,785.65C1475.03,785.65 1475.03,815.07 1477.51,815.07L1482.46,815.07C1484.94,815.07 1484.94,763.50 1487.42,763.50C1489.89,763.50 1489.89,815.07 1492.37,815.07C1494.85,815.07 1494.85,788.19 1497.33,788.19C1499.80,788.19 1499.80,815.07 1502.28,815.07L1507.24,815.07C1509.71,815.07 1509.71,802.38 1512.19,802.38C1514.67,802.38 1514.67,769.26 1517.15,769.26C1519.62,769.26 1519.62,815.07 1522.10,815.07C1524.58,815.07 1524.58,796.61 1527.06,796.61C1529.53,796.61 1529.53,775.61 1532.01,775.61C1534.49,775.61 1534.49,815.07 1536.97,815.07C1539.44,815.07 1539.44,800.88 1541.92,800.88C1544.40,800.88 1544.40,802.38 1546.88,802.38C1549.35,802.38 1549.35,815.07 1551.83,815.07L1556.79,815.07L1561.74,815.07L1566.70,815.07C1569.17,815.07 1569.17,780.46 1571.65,780.46C1574.13,780.46 1574.13,815.07 1576.61,815.07C1579.08,815.07 1579.08,792.46 1581.56,792.46C1584.04,792.46 1584.04,815.07 1586.52,815.07L1591.47,815.07C1593.95,815.07 1593.95,791.42 1596.43,791.42C1598.90,791.42 1598.90,755.53 1601.38,755.53C1603.86,755.53 1603.86,769.26 1606.34,769.26C1608.81,769.26 1608.81,800.88 1611.29,800.88C1613.77,800.88 1613.77,763.50 1616.25,763.50C1618.72,763.50 1618.72,796.61 1621.20,796.61C1623.68,796.61 1623.68,815.07 1626.16,815.07C1628.63,815.07 1628.63,795.69 1631.11,795.69C1633.59,795.69 1633.59,815.07 1636.07,815.07C1638.54,815.07 1638.54,793.15 1641.02,793.15C1643.50,793.15 1643.50,815.07 1645.98,815.07L1650.93,815.07L1655.89,815.07C1658.37,815.07 1658.37,804.11 1660.84,804.11C1663.32,804.11 1663.32,815.07 1665.80,815.07C1668.28,815.07 1668.28,789.34 1670.75,789.34C1673.23,789.34 1673.23,757.38 1675.71,757.38C1678.19,757.38 1678.19,815.07 1680.66,815.07L1685.62,815.07C1688.10,815.07 1688.10,800.53 1690.57,800.53C1693.05,800.53 1693.05,800.88 1695.53,800.88C1698.01,800.88 1698.01,815.07 1700.48,815.07C1702.96,815.07 1702.96,792.46 1705.44,792.46C1707.92,792.46 1707.92,804.11 1710.39,804.11C1712.87,804.11 1712.87,803.53 1715.35,803.53C1717.83,803.53 1717.83,796.26 1720.30,796.26C1722.78,796.26 1722.78,815.07 1725.26,815.07C1727.74,815.07 1727.74,787.61 1730.21,787.61C1732.69,787.61 1732.69,815.07 1735.17,815.07L1740.12,815.07L1745.08,815.07L1750.03,815.07C1752.51,815.07 1752.51,757.61 1754.99,757.61C1757.47,757.61 1757.47,795.69 1759.94,795.69C1762.42,795.69 1762.42,815.07 1764.90,815.07C1767.38,815.07 1767.38,796.61 1769.85,796.61C1772.33,796.61 1772.33,748.15 1774.81,748.15C1777.29,748.15 1777.29,815.07 1779.76,815.07L1784.72,815.07C1787.20,815.07 1787.20,745.96 1789.67,745.96C1792.15,745.96 1792.15,815.07 1794.63,815.07C1797.11,815.07 1797.11,789.34 1799.58,789.34C1802.06,789.34 1802.06,798.92 1804.54,798.92C1807.02,798.92 1807.02,815.07 1809.49,815.07C1811.97,815.07 1811.97,786.80 1814.45,786.80C1816.93,786.80 1816.93,815.07 1819.40,815.07L1824.36,815.07L1829.31,815.07C1831.79,815.07 1831.79,789.34 1834.27,789.34C1836.75,789.34 1836.75,815.07 1839.22,815.07C1841.70,815.07 1841.70,784.03 1844.18,784.03C1846.66,784.03 1846.66,815.07 1849.13,815.07L1854.09,815.07L1859.04,815.07L1864.00,815.07" fill="none" stroke="#479dcb" stroke-width="2" stroke-linejoin="round" stroke-linecap="butt"/><rect x="1487" y="872.3" width="12.500" height="2" rx="1" fill="#479dcb"/><path d="M1625.5,873.3h12" fill="none" stroke="#8db8cf" stroke-width="1.750" stroke-dasharray="0.1 4" stroke-linecap="round"/></svg>
<span class="t" style="left:1373.00px;top:635.00px;font-size:11px;line-height:12px;font-weight:400;color:#616161;letter-spacing:0.076px;">$150</span>
<span class="t" style="left:1373.00px;top:693.00px;font-size:11px;line-height:12px;font-weight:400;color:#616161;letter-spacing:0.076px;">$100</span>
<span class="t" style="left:1373.00px;top:750.00px;font-size:11px;line-height:12px;font-weight:400;color:#616161;letter-spacing:0.873px;">$50</span>
<span class="t" style="left:1373.00px;top:808.00px;font-size:11px;line-height:12px;font-weight:400;color:#616161;letter-spacing:1.064px;">$0</span>
<span class="t" style="left:1408.00px;top:830.00px;font-size:11px;line-height:12px;font-weight:400;color:#616161;letter-spacing:0.431px;">Aug 5</span>
<span class="t" style="left:1470.00px;top:830.00px;font-size:11px;line-height:12px;font-weight:400;color:#616161;letter-spacing:0.139px;">Aug 18</span>
<span class="t" style="left:1534.00px;top:830.00px;font-size:11px;line-height:12px;font-weight:400;color:#616161;letter-spacing:0.139px;">Aug 31</span>
<span class="t" style="left:1598.00px;top:830.00px;font-size:11px;line-height:12px;font-weight:400;color:#616161;letter-spacing:0.139px;">Sep 13</span>
<span class="t" style="left:1663.00px;top:830.00px;font-size:11px;line-height:12px;font-weight:400;color:#616161;letter-spacing:0.139px;">Sep 26</span>
<span class="t" style="left:1731.00px;top:830.00px;font-size:11px;line-height:12px;font-weight:400;color:#616161;letter-spacing:0.394px;">Oct 9</span>
<span class="t" style="left:1793.00px;top:830.00px;font-size:11px;line-height:12px;font-weight:400;color:#616161;letter-spacing:0.130px;">Oct 22</span>
<span class="t" style="left:1507.00px;top:867.00px;font-size:11px;line-height:12px;font-weight:400;color:#616161;letter-spacing:0.320px;">Aug 5–Nov 2, 2024</span>
<span class="t" style="left:1645.00px;top:867.00px;font-size:11px;line-height:12px;font-weight:400;color:#616161;letter-spacing:0.306px;">May 7–Aug 4, 2024</span>
<span class="t" style="left:280.00px;top:933.00px;font-size:13px;line-height:15px;font-weight:400;color:#303030;letter-spacing:0.616px;-webkit-text-stroke:0.3px #303030;">Top selling products</span>
<div class="ul" style="left:279.5px;top:948.2px;width:128.1px"></div>
<span class="t" style="left:826.00px;top:933.00px;font-size:13px;line-height:15px;font-weight:400;color:#303030;letter-spacing:0.536px;-webkit-text-stroke:0.3px #303030;">Customer cohort analysis</span>
<div class="ul" style="left:825.5px;top:948.2px;width:160.5px"></div>
<span class="t" style="left:1371.00px;top:933.00px;font-size:13px;line-height:15px;font-weight:400;color:#303030;letter-spacing:0.511px;-webkit-text-stroke:0.3px #303030;">Returning customer rate</span>
<div class="ul" style="left:1370.5px;top:948.2px;width:152.2px"></div>
<div class="abs" style="left:1910px;top:60px;width:1px;height:254px;background:#f9f9f9"></div>
<div class="abs" style="left:1911px;top:67px;width:7px;height:246px;background:#b3b3b3"></div>
<div class="abs" style="left:1911px;top:313px;width:7px;height:1px;background:#f9f9f9"></div>
<svg style="left:1911px;top:60px" width="7" height="5" viewBox="0 0 7 5"><path d="M0.800 4.200 L3.500 1 L6.200 4.200Z" fill="#a3a3a3"/></svg>
<svg style="left:1911px;top:936px" width="7" height="5" viewBox="0 0 7 5"><path d="M0.800 0.800 L3.500 4 L6.200 0.800Z" fill="#a3a3a3"/></svg>
<div class="abs" style="left:1586px;top:843.5px;width:208px;height:88.5px;background:#f9f9f9;border-radius:8px;box-shadow:0 0 0 1px rgba(0,0,0,.06),0 6px 14px rgba(0,0,0,.16)"></div>
<div class="abs" style="left:1711px;top:850px;width:38px;height:37px;background:#fdfdfd;border-radius:4px;box-shadow:0 0 0 1px rgba(0,0,0,.04)"></div>
<svg style="left:1602px;top:860px" width="16" height="16" viewBox="0 0 16 16"><path d="M8 0.300C13.200 0.300 15.800 2.600 15.800 8 15.800 13.400 13.200 15.700 8 15.700 2.800 15.700 0.200 13.400 0.200 8 0.200 2.600 2.800 0.300 8 0.300Z" fill="#5ea71c"/><path d="M4.900 8.400l2.100 2 4-4.200" stroke="#e4f7cf" stroke-width="1.600" fill="none" stroke-linecap="round" stroke-linejoin="round"/></svg>
<svg style="left:1641px;top:859px" width="18" height="18" viewBox="0 0 18 18"><defs><linearGradient id="vg" x1="0" y1="0" x2="1" y2="0.600"><stop offset="0" stop-color="#3c3c46"/><stop offset="0.550" stop-color="#6a6a75"/><stop offset="1" stop-color="#dcdce2"/></linearGradient></defs><path d="M0.900 4.300h4.600l3.600 5.200 1.500 1-0.400 1.300-3.700 3.700Z" fill="url(#vg)"/><circle cx="12.500" cy="5.500" r="4.450" fill="#d52f4f"/><path d="M11.100 4.100l2.800 2.800M13.900 4.100l-2.800 2.800" stroke="#fbdde3" stroke-width="1.300" stroke-linecap="round"/></svg>
<svg style="left:1682px;top:860.500px" width="16" height="16" viewBox="0 0 16 16" fill="#fbfbfb" stroke="#636363" stroke-width="0.900"><rect x="4.200" y="0.600" width="3.300" height="14.300" rx="1.650"/><rect x="0.600" y="4.600" width="14.300" height="3.300" rx="1.650"/><rect x="8.100" y="0.600" width="3.300" height="14.300" rx="1.650"/><rect x="0.600" y="8.500" width="14.300" height="3.300" rx="1.650"/><path d="M4.200 9.500v4a1.650 1.650 0 0 0 3.300 0v-4" /></svg>
<svg style="left:1722px;top:860px" width="16" height="16" viewBox="0 0 16 16"><path d="M1.200 15.200c1.300-5 6-11.700 13.800-14.600 .3 4.600-3.600 9.300-9.300 11.200-1.900.7-3.300 1.800-4.500 3.400Z" fill="#b596e0"/><path d="M1 15.400c2.300-4.700 6.500-9.300 12.600-13.300" stroke="#8153bd" stroke-width="1.100" fill="none" stroke-linecap="round"/></svg>
<svg style="left:1763px;top:859.500px" width="14" height="17" viewBox="0 0 14 17"><path d="M1 5c0-2.500 2.700-4.300 6-4.300s6 1.800 6 4.300v1.200h-12Z" fill="#1c1c1c"/><path d="M3 3.700c1-1.200 2.400-1.700 4-1.700s3 .5 4 1.700" stroke="#777" stroke-width="0.800" fill="none"/><rect x="2.600" y="6.500" width="8.800" height="10" rx="1.500" fill="#1c1c1c"/><path d="M5.200 9v5.200M8.800 9v5.200M5.200 11.600h3.600" stroke="#9a9a9a" stroke-width="1.200"/></svg>
<svg style="left:1602px;top:899.500px" width="17" height="17" viewBox="0 0 17 17"><path d="M7.500 0.600c1.800 1.200 3.800 1.700 6.300 1.700v5.200c0 3.800-2.600 6.500-6.300 8-3.700-1.500-6.300-4.200-6.300-8v-5.200c2.500 0 4.500-.5 6.300-1.700Z" fill="#1b8fd8"/><path d="M7.500 0.600c-1.800 1.200-3.800 1.700-6.300 1.700v5.200c0 3.800 2.600 6.500 6.300 8Z" fill="#33b1ee"/><path d="M7.500 6 L1.600 9.500 C2.500 12.300 4.600 14.300 7.500 15.500Z" fill="#0f6cb3"/><path d="M12 8.200l4.600 8h-9.200Z" fill="#f8c52c"/><path d="M12 11v2.800" stroke="#222" stroke-width="1.100"/><circle cx="12" cy="15" r="0.600" fill="#222"/></svg>
<svg style="left:1644px;top:899.500px" width="12" height="17" viewBox="0 0 12 17"><rect x="0.200" y="0.300" width="11.600" height="16.400" rx="5.800" fill="#0a7fe0"/><path d="M3.300 5.600l5.200 5.200-2.700 2.500v-9.600l2.700 2.500-5.200 5.200" stroke="#fff" stroke-width="1" fill="none" stroke-linejoin="round"/></svg>
<div class="abs" style="left:0;top:945px;width:1918px;height:1px;background:#b0b0b0"></div>
</div></body></html>
